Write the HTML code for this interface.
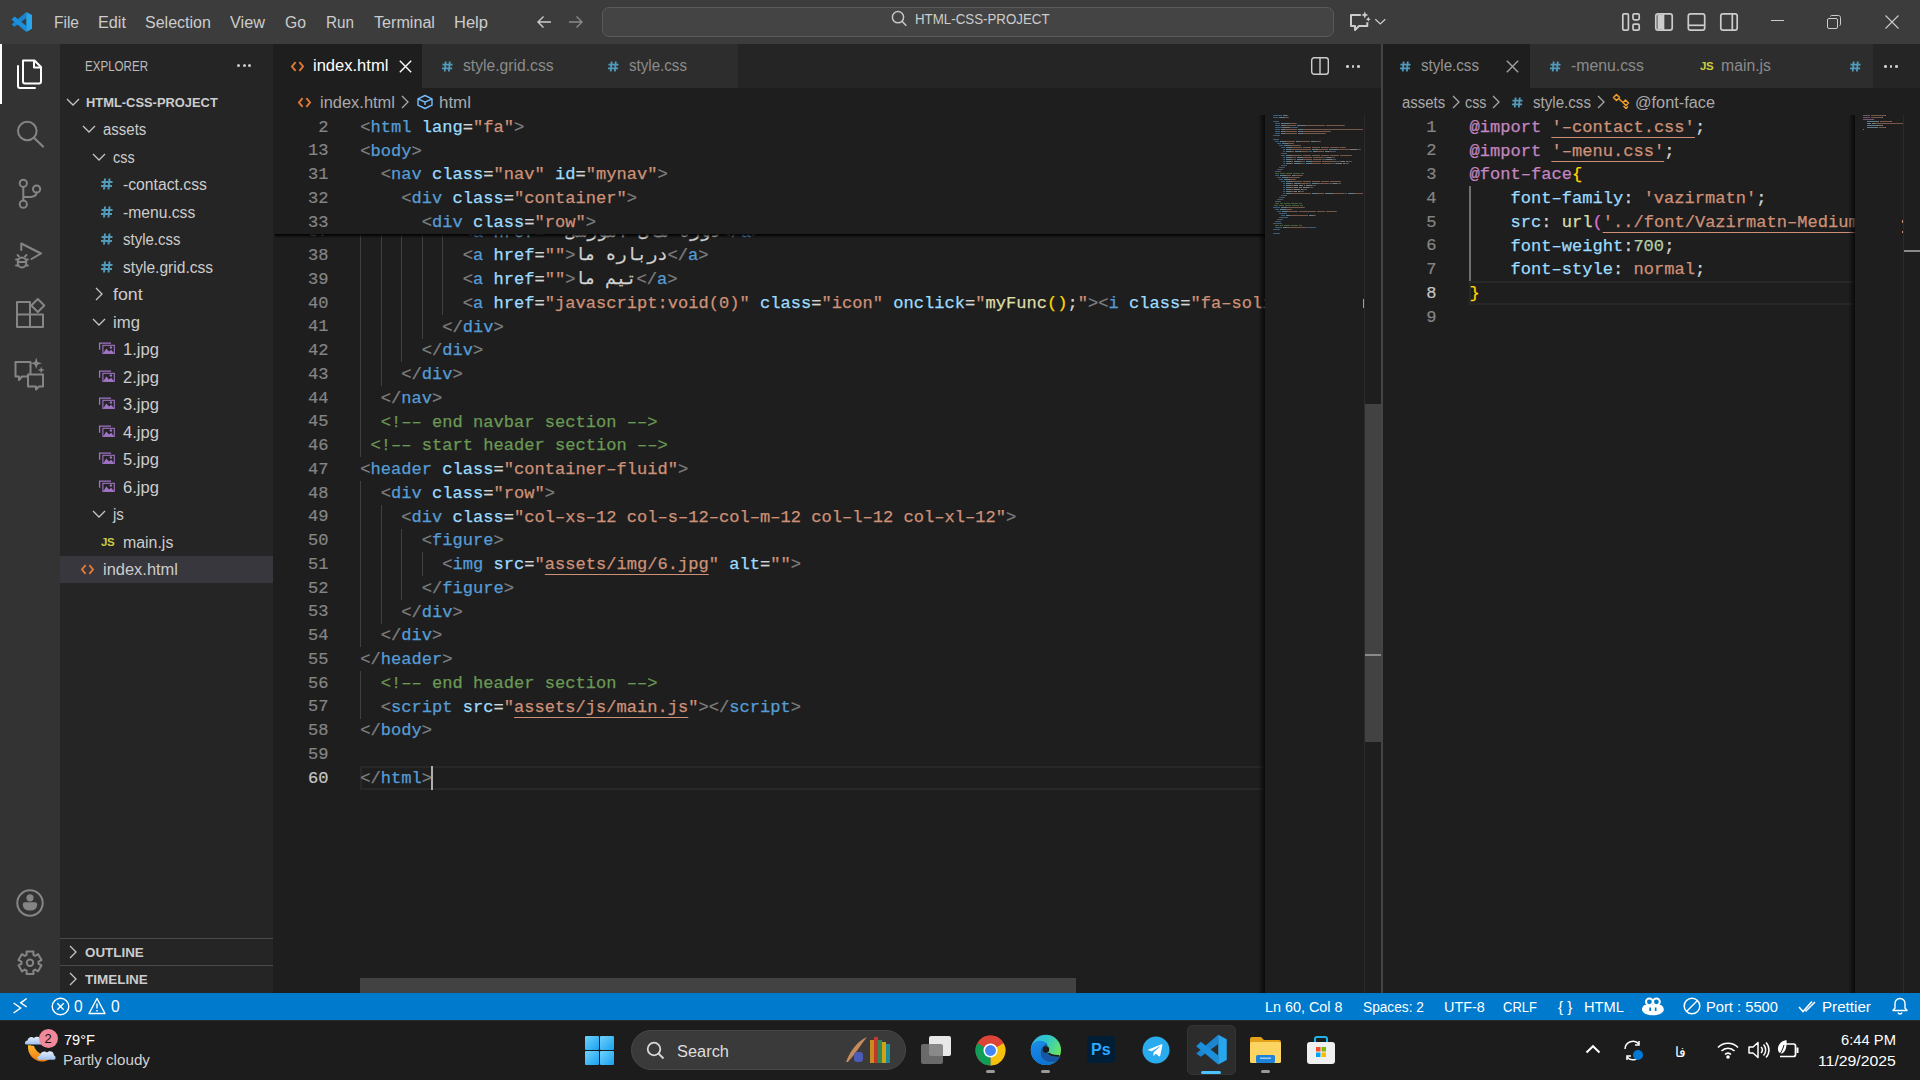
<!DOCTYPE html><html><head><meta charset="utf-8"><style>
*{box-sizing:border-box}
html,body{margin:0;padding:0;overflow:hidden}
body{width:1920px;height:1080px;overflow:hidden;position:relative;background:#1e1e1e;font-family:"Liberation Sans",sans-serif;color:#cccccc}
.a{position:absolute}
.t{position:absolute;white-space:pre;line-height:1}
.code{position:absolute;white-space:pre;font-family:"Liberation Mono",monospace;font-size:17.08px;line-height:23.75px;height:23.75px;padding-top:0.8px;-webkit-text-stroke:0.25px currentColor}
.ln{position:absolute;white-space:pre;font-family:"Liberation Mono",monospace;font-size:17.08px;line-height:23.75px;color:#858585;text-align:right;padding-top:0.6px;-webkit-text-stroke:0.2px currentColor}
svg{position:absolute;overflow:visible}
</style></head><body>
<div class="a" style="left:0.00px;top:0.00px;width:1920.00px;height:44.00px;background:#3c3c3c;"></div><svg style="left:8.0px;top:8.0px" width="30.0" height="30.0" viewBox="8 8 30 30"><path d="M26.3 11.9 L26.3 18.0 L14.6 26.7 L11.5 24.4 Z" fill="#1a86d2"/><path d="M14.6 16.5 L26.3 25.8 L26.3 31.9 L11.5 19.6 Z" fill="#1c8fdc"/><path d="M26.3 11.9 L32.0 14.9 L32.0 28.8 L26.3 31.9 Z" fill="#27a6ee"/></svg><div class="t" style="left:54.0px;top:14.76px;font-size:16.00px;color:#cccccc;font-weight:normal;transform:scaleX(0.9681);transform-origin:0 0;">File</div><div class="t" style="left:98.0px;top:14.76px;font-size:16.00px;color:#cccccc;font-weight:normal;transform:scaleX(1.0138);transform-origin:0 0;">Edit</div><div class="t" style="left:145.0px;top:14.76px;font-size:16.00px;color:#cccccc;font-weight:normal;transform:scaleX(1.0020);transform-origin:0 0;">Selection</div><div class="t" style="left:230.0px;top:14.76px;font-size:16.00px;color:#cccccc;font-weight:normal;transform:scaleX(1.0166);transform-origin:0 0;">View</div><div class="t" style="left:285.0px;top:14.76px;font-size:16.00px;color:#cccccc;font-weight:normal;transform:scaleX(0.9820);transform-origin:0 0;">Go</div><div class="t" style="left:326.0px;top:14.76px;font-size:16.00px;color:#cccccc;font-weight:normal;transform:scaleX(0.9523);transform-origin:0 0;">Run</div><div class="t" style="left:374.0px;top:14.76px;font-size:16.00px;color:#cccccc;font-weight:normal;transform:scaleX(1.0081);transform-origin:0 0;">Terminal</div><div class="t" style="left:454.0px;top:14.76px;font-size:16.00px;color:#cccccc;font-weight:normal;transform:scaleX(1.0320);transform-origin:0 0;">Help</div><svg style="left:536px;top:14px" width="16" height="16" viewBox="0 0 16 16"><path d="M15 8H2M7.5 2.5L2 8l5.5 5.5" stroke="#cccccc" stroke-width="1.4" fill="none"/></svg><svg style="left:568px;top:14px" width="16" height="16" viewBox="0 0 16 16"><path d="M1 8h13M8.5 2.5L14 8l-5.5 5.5" stroke="#8a8a8a" stroke-width="1.4" fill="none"/></svg><div class="a" style="left:602px;top:7px;width:732px;height:30px;background:#444444;border:1px solid #5a5a5a;border-radius:7px"></div><svg style="left:885px;top:5px" width="30" height="30" viewBox="885 5 30 30" fill="none"><circle cx="898" cy="17.2" r="5.6" stroke="#c5c5c5" stroke-width="1.5"/><path d="M902 21.3 L906.3 25.8" stroke="#c5c5c5" stroke-width="1.6"/></svg><div class="t" style="left:915.0px;top:10.65px;font-size:15.30px;color:#cccccc;font-weight:normal;transform:scaleX(0.8697);transform-origin:0 0;">HTML-CSS-PROJECT</div><svg style="left:1340px;top:4px" width="60" height="36" viewBox="1340 4 60 36" fill="none"><path d="M1360.8 15 H1351 V26 H1355 V30 L1359 26 H1367.3 V22.3" stroke="#cccccc" stroke-width="2" stroke-linejoin="round"/><path d="M1364.8 11.5 L1365.9 14 L1368.4 15 L1365.9 16 L1364.8 18.5 L1363.7 16 L1361.2 15 L1363.7 14 Z" fill="#cccccc"/><path d="M1368.3 16.8 L1369.1 18.5 L1370.8 19.3 L1369.1 20.1 L1368.3 21.8 L1367.5 20.1 L1365.8 19.3 L1367.5 18.5 Z" fill="#cccccc"/><path d="M1375.3 19.3 L1380.3 23.9 L1385.3 19.3" stroke="#cccccc" stroke-width="1.3"/></svg><svg style="left:1615px;top:8px" width="130" height="30" viewBox="1615 8 130 30" fill="none"><g stroke="#cccccc" stroke-width="1.7"><rect x="1622.8" y="13.8" width="5.6" height="16.4" rx="1.3"/><rect x="1633" y="13.8" width="6.2" height="6" rx="1.3"/><rect x="1633" y="24.2" width="6.2" height="6" rx="1.3"/><rect x="1655.8" y="13.8" width="16.4" height="16.4" rx="2.2"/><rect x="1688.3" y="13.8" width="16.4" height="16.4" rx="2.2"/><path d="M1688.5 25.3 H1704.5"/><rect x="1720.8" y="13.8" width="16.4" height="16.4" rx="2.2"/><path d="M1732.3 14 V30"/></g><path d="M1657.5 14.5 H1664 V29.5 H1657.5 Z" fill="#cccccc"/><path d="M1663.5 14 V30" stroke="#cccccc" stroke-width="1.7"/></svg><div class="a" style="left:1771.00px;top:20.00px;width:13.00px;height:1.20px;background:#cccccc;"></div><svg style="left:1827px;top:15px" width="14" height="14" viewBox="0 0 14 14" fill="none" stroke="#cccccc" stroke-width="1">
<rect x="0.5" y="3.5" width="10" height="10" rx="1.5"/><path d="M3.5 1.5c0-.6.4-1 1-1h7c1.1 0 2 .9 2 2v7c0 .6-.4 1-1 1"/></svg><svg style="left:1885px;top:15px" width="14" height="14" viewBox="0 0 14 14" fill="none" stroke="#cccccc" stroke-width="1.1">
<path d="M0.5 0.5l13 13M13.5 0.5l-13 13"/></svg><div class="a" style="left:0.00px;top:44.00px;width:60.00px;height:949.00px;background:#333333;"></div><div class="a" style="left:0.00px;top:44.00px;width:2.00px;height:60.00px;background:#ffffff;"></div><svg style="left:0;top:0" width="60" height="1000" viewBox="0 0 60 1000" fill="none" stroke-linecap="round" stroke-linejoin="round"><path d="M23 60.5 H34.5 L41 67 V81.5 Q41 83.5 39 83.5 H25 Q23 83.5 23 81.5 Z" stroke="#ffffff" stroke-width="2"/><path d="M34 61 V67.5 H40.5" stroke="#ffffff" stroke-width="2"/><path d="M18 66 V86 Q18 88 20 88 H35" stroke="#ffffff" stroke-width="2"/><circle cx="27.3" cy="131" r="9.3" stroke="#858585" stroke-width="2"/><path d="M34.2 138 L43 146.5" stroke="#858585" stroke-width="2.2"/><circle cx="23.3" cy="183.3" r="3.6" stroke="#858585" stroke-width="2"/><circle cx="23.3" cy="204.2" r="3.6" stroke="#858585" stroke-width="2"/><circle cx="36.6" cy="189" r="3.6" stroke="#858585" stroke-width="2"/><path d="M23.3 187 V200.5 M36.6 192.6 Q36.6 196.5 31 197 L23.5 197" stroke="#858585" stroke-width="2"/><path d="M21.3 250 V243.5 L41 253.5 L31.5 259" stroke="#858585" stroke-width="2"/><ellipse cx="22" cy="262.5" rx="4.3" ry="5" stroke="#858585" stroke-width="2"/><path d="M16 259.5 H18 M16 265.5 H18 M26 259.5 H28 M26 265.5 H28 M19 256.5 L17.5 255 M25 256.5 L26.5 255 M18 262 H26" stroke="#858585" stroke-width="1.8"/><path d="M17 302 H30 V327 H17 Z M17 314.5 H43 V327 H30" stroke="#858585" stroke-width="2"/><path d="M37.8 299 L44.3 305.5 L37.8 312 L31.3 305.5 Z" stroke="#858585" stroke-width="2"/><path d="M15.5 362 H30.5 V376.5 H22 L19 380 V376.5 H15.5 Z" stroke="#858585" stroke-width="2"/><path d="M28 374.5 H43 V386.5 H39 L36 389.5 V386.5 H28 Z" stroke="#858585" stroke-width="2" fill="#333333"/><path d="M36.2 357.5 L37.6 361.9 L42 363.3 L37.6 364.7 L36.2 369.1 L34.8 364.7 L30.4 363.3 L34.8 361.9 Z" fill="#858585"/><path d="M41.2 366.5 L42.1 369.1 L44.7 370 L42.1 370.9 L41.2 373.5 L40.3 370.9 L37.7 370 L40.3 369.1 Z" fill="#858585"/><circle cx="30" cy="903" r="12.7" stroke="#858585" stroke-width="2"/><circle cx="30" cy="897.8" r="3.6" fill="#858585"/><path d="M22.8 904.5 Q22.8 902.3 25 902.3 H35 Q37.2 902.3 37.2 904.5 Q37.2 910.5 30 910.5 Q22.8 910.5 22.8 904.5 Z" fill="#858585"/></svg><svg style="left:0;top:0" width="60" height="1000" viewBox="0 0 60 1000" fill="none"><path d="M26.51 951.43 L33.49 951.43 L33.35 954.78 L35.19 955.84 L38.02 954.04 L41.51 960.08 L38.53 961.64 L38.53 963.76 L41.51 965.32 L38.02 971.36 L35.19 969.56 L33.35 970.62 L33.49 973.97 L26.51 973.97 L26.65 970.62 L24.81 969.56 L21.98 971.36 L18.49 965.32 L21.47 963.76 L21.47 961.64 L18.49 960.08 L21.98 954.04 L24.81 955.84 L26.65 954.78 Z" stroke="#858585" stroke-width="2" stroke-linejoin="round"/><circle cx="30" cy="962.7" r="3.2" stroke="#858585" stroke-width="2"/></svg><div class="a" style="left:60.00px;top:44.00px;width:213.00px;height:949.00px;background:#252526;"></div><div class="t" style="left:85.3px;top:59.28px;font-size:14.20px;color:#bbbbbb;font-weight:normal;transform:scaleX(0.8159);transform-origin:0 0;">EXPLORER</div><div class="a" style="left:237.30px;top:64.30px;width:3.00px;height:3.00px;background:#cccccc;border-radius:50%"></div><div class="a" style="left:242.60px;top:64.30px;width:3.00px;height:3.00px;background:#cccccc;border-radius:50%"></div><div class="a" style="left:247.90px;top:64.30px;width:3.00px;height:3.00px;background:#cccccc;border-radius:50%"></div><svg style="left:66.0px;top:97.8px" width="14" height="8" viewBox="0 0 14 8"><path d="M1 1l6 6 6-6" stroke="#c5c5c5" stroke-width="1.3" fill="none"/></svg><div class="t" style="left:85.5px;top:95.54px;font-size:13.60px;color:#cccccc;font-weight:bold;transform:scaleX(0.9485);transform-origin:0 0;">HTML-CSS-PROJECT</div><svg style="left:82.0px;top:125.2px" width="14" height="8" viewBox="0 0 14 8"><path d="M1 1l6 6 6-6" stroke="#c5c5c5" stroke-width="1.3" fill="none"/></svg><div class="t" style="left:102.8px;top:122.18px;font-size:15.80px;color:#cccccc;font-weight:normal;transform:scaleX(0.9494);transform-origin:0 0;">assets</div><svg style="left:92.0px;top:152.8px" width="14" height="8" viewBox="0 0 14 8"><path d="M1 1l6 6 6-6" stroke="#c5c5c5" stroke-width="1.3" fill="none"/></svg><div class="t" style="left:113.0px;top:149.68px;font-size:15.80px;color:#cccccc;font-weight:normal;transform:scaleX(0.9133);transform-origin:0 0;">css</div><svg style="left:101.4px;top:178.2px" width="12" height="12" viewBox="0 0 12 12"><path d="M4 0.5L3 11.5M8.5 0.5L7.5 11.5M0.5 4h11M0 8h11" stroke="#519aba" stroke-width="2" fill="none"/></svg><div class="t" style="left:123.0px;top:177.18px;font-size:15.80px;color:#cccccc;font-weight:normal;transform:scaleX(0.9960);transform-origin:0 0;">-contact.css</div><svg style="left:101.4px;top:205.8px" width="12" height="12" viewBox="0 0 12 12"><path d="M4 0.5L3 11.5M8.5 0.5L7.5 11.5M0.5 4h11M0 8h11" stroke="#519aba" stroke-width="2" fill="none"/></svg><div class="t" style="left:123.0px;top:204.68px;font-size:15.80px;color:#cccccc;font-weight:normal;transform:scaleX(0.9914);transform-origin:0 0;">-menu.css</div><svg style="left:101.4px;top:233.2px" width="12" height="12" viewBox="0 0 12 12"><path d="M4 0.5L3 11.5M8.5 0.5L7.5 11.5M0.5 4h11M0 8h11" stroke="#519aba" stroke-width="2" fill="none"/></svg><div class="t" style="left:123.0px;top:232.18px;font-size:15.80px;color:#cccccc;font-weight:normal;transform:scaleX(0.9483);transform-origin:0 0;">style.css</div><svg style="left:101.4px;top:260.8px" width="12" height="12" viewBox="0 0 12 12"><path d="M4 0.5L3 11.5M8.5 0.5L7.5 11.5M0.5 4h11M0 8h11" stroke="#519aba" stroke-width="2" fill="none"/></svg><div class="t" style="left:123.0px;top:259.68px;font-size:15.80px;color:#cccccc;font-weight:normal;transform:scaleX(0.9874);transform-origin:0 0;">style.grid.css</div><svg style="left:95.0px;top:287.2px" width="8" height="14" viewBox="0 0 8 14"><path d="M1 1l6 6-6 6" stroke="#c5c5c5" stroke-width="1.3" fill="none"/></svg><div class="t" style="left:113.0px;top:287.18px;font-size:15.80px;color:#cccccc;font-weight:normal;transform:scaleX(1.1248);transform-origin:0 0;">font</div><svg style="left:92.0px;top:317.8px" width="14" height="8" viewBox="0 0 14 8"><path d="M1 1l6 6 6-6" stroke="#c5c5c5" stroke-width="1.3" fill="none"/></svg><div class="t" style="left:113.0px;top:314.68px;font-size:15.80px;color:#cccccc;font-weight:normal;transform:scaleX(1.0581);transform-origin:0 0;">img</div><svg style="left:96px;top:335.0px" width="24" height="24" viewBox="96 335.0 24 24" fill="none"><path d="M99.6 349.80 V343.10 H111" stroke="#a074c4" stroke-width="1.3"/><rect x="102.9" y="345.30" width="11.4" height="8.1" stroke="#a074c4" stroke-width="1.1"/><path d="M103.3 353.20 L106.3 348.60 L109 351.60 L111.2 349.80 L114 353.20 Z" fill="#a074c4"/><circle cx="110.9" cy="347.50" r="1.2" fill="#a074c4"/></svg><div class="t" style="left:122.7px;top:342.18px;font-size:15.80px;color:#cccccc;font-weight:normal;transform:scaleX(1.0491);transform-origin:0 0;">1.jpg</div><svg style="left:96px;top:362.5px" width="24" height="24" viewBox="96 362.5 24 24" fill="none"><path d="M99.6 377.30 V370.60 H111" stroke="#a074c4" stroke-width="1.3"/><rect x="102.9" y="372.80" width="11.4" height="8.1" stroke="#a074c4" stroke-width="1.1"/><path d="M103.3 380.70 L106.3 376.10 L109 379.10 L111.2 377.30 L114 380.70 Z" fill="#a074c4"/><circle cx="110.9" cy="375.00" r="1.2" fill="#a074c4"/></svg><div class="t" style="left:122.7px;top:369.68px;font-size:15.80px;color:#cccccc;font-weight:normal;transform:scaleX(1.0491);transform-origin:0 0;">2.jpg</div><svg style="left:96px;top:390.0px" width="24" height="24" viewBox="96 390.0 24 24" fill="none"><path d="M99.6 404.80 V398.10 H111" stroke="#a074c4" stroke-width="1.3"/><rect x="102.9" y="400.30" width="11.4" height="8.1" stroke="#a074c4" stroke-width="1.1"/><path d="M103.3 408.20 L106.3 403.60 L109 406.60 L111.2 404.80 L114 408.20 Z" fill="#a074c4"/><circle cx="110.9" cy="402.50" r="1.2" fill="#a074c4"/></svg><div class="t" style="left:122.7px;top:397.18px;font-size:15.80px;color:#cccccc;font-weight:normal;transform:scaleX(1.0491);transform-origin:0 0;">3.jpg</div><svg style="left:96px;top:417.5px" width="24" height="24" viewBox="96 417.5 24 24" fill="none"><path d="M99.6 432.30 V425.60 H111" stroke="#a074c4" stroke-width="1.3"/><rect x="102.9" y="427.80" width="11.4" height="8.1" stroke="#a074c4" stroke-width="1.1"/><path d="M103.3 435.70 L106.3 431.10 L109 434.10 L111.2 432.30 L114 435.70 Z" fill="#a074c4"/><circle cx="110.9" cy="430.00" r="1.2" fill="#a074c4"/></svg><div class="t" style="left:122.7px;top:424.68px;font-size:15.80px;color:#cccccc;font-weight:normal;transform:scaleX(1.0491);transform-origin:0 0;">4.jpg</div><svg style="left:96px;top:445.0px" width="24" height="24" viewBox="96 445.0 24 24" fill="none"><path d="M99.6 459.80 V453.10 H111" stroke="#a074c4" stroke-width="1.3"/><rect x="102.9" y="455.30" width="11.4" height="8.1" stroke="#a074c4" stroke-width="1.1"/><path d="M103.3 463.20 L106.3 458.60 L109 461.60 L111.2 459.80 L114 463.20 Z" fill="#a074c4"/><circle cx="110.9" cy="457.50" r="1.2" fill="#a074c4"/></svg><div class="t" style="left:122.7px;top:452.18px;font-size:15.80px;color:#cccccc;font-weight:normal;transform:scaleX(1.0491);transform-origin:0 0;">5.jpg</div><svg style="left:96px;top:472.5px" width="24" height="24" viewBox="96 472.5 24 24" fill="none"><path d="M99.6 487.30 V480.60 H111" stroke="#a074c4" stroke-width="1.3"/><rect x="102.9" y="482.80" width="11.4" height="8.1" stroke="#a074c4" stroke-width="1.1"/><path d="M103.3 490.70 L106.3 486.10 L109 489.10 L111.2 487.30 L114 490.70 Z" fill="#a074c4"/><circle cx="110.9" cy="485.00" r="1.2" fill="#a074c4"/></svg><div class="t" style="left:122.7px;top:479.68px;font-size:15.80px;color:#cccccc;font-weight:normal;transform:scaleX(1.0491);transform-origin:0 0;">6.jpg</div><svg style="left:92.0px;top:510.2px" width="14" height="8" viewBox="0 0 14 8"><path d="M1 1l6 6 6-6" stroke="#c5c5c5" stroke-width="1.3" fill="none"/></svg><div class="t" style="left:113.0px;top:507.18px;font-size:15.80px;color:#cccccc;font-weight:normal;transform:scaleX(0.9585);transform-origin:0 0;">js</div><div class="t" style="left:101.0px;top:537.02px;font-size:11.50px;color:#cbcb41;font-weight:bold;letter-spacing:-0.5px">JS</div><div class="t" style="left:122.7px;top:534.68px;font-size:15.80px;color:#cccccc;font-weight:normal;transform:scaleX(1.0060);transform-origin:0 0;">main.js</div><div class="a" style="left:60.00px;top:555.50px;width:213.00px;height:27.50px;background:#37373d;"></div><svg style="left:80.5px;top:563.8px" width="13" height="11" viewBox="0 0 13 11"><path d="M4.6 1.2L1 5.5l3.6 4.3M8.4 1.2L12 5.5l-3.6 4.3" stroke="#e37933" stroke-width="1.9" fill="none"/></svg><div class="t" style="left:103.0px;top:562.18px;font-size:15.80px;color:#cccccc;font-weight:normal;transform:scaleX(1.0409);transform-origin:0 0;">index.html</div><div class="a" style="left:60.00px;top:938.00px;width:213.00px;height:1.00px;background:#4a4a4b;"></div><div class="a" style="left:60.00px;top:965.00px;width:213.00px;height:1.00px;background:#4a4a4b;"></div><svg style="left:69.0px;top:945.0px" width="8" height="14" viewBox="0 0 8 14"><path d="M1 1l6 6-6 6" stroke="#c5c5c5" stroke-width="1.3" fill="none"/></svg><div class="t" style="left:85.0px;top:945.99px;font-size:13.60px;color:#cccccc;font-weight:bold;transform:scaleX(0.9857);transform-origin:0 0;">OUTLINE</div><svg style="left:69.0px;top:972.0px" width="8" height="14" viewBox="0 0 8 14"><path d="M1 1l6 6-6 6" stroke="#c5c5c5" stroke-width="1.3" fill="none"/></svg><div class="t" style="left:85.0px;top:972.99px;font-size:13.60px;color:#cccccc;font-weight:bold;transform:scaleX(0.9902);transform-origin:0 0;">TIMELINE</div><div class="a" style="left:273.00px;top:44.00px;width:1108.00px;height:44.00px;background:#252526;"></div><div class="a" style="left:273.00px;top:44.00px;width:149.00px;height:44.00px;background:#1e1e1e;"></div><div class="a" style="left:422.00px;top:44.00px;width:1.00px;height:44.00px;background:#252526;"></div><svg style="left:290.7px;top:60.5px" width="13" height="11" viewBox="0 0 13 11"><path d="M4.6 1.2L1 5.5l3.6 4.3M8.4 1.2L12 5.5l-3.6 4.3" stroke="#e37933" stroke-width="1.9" fill="none"/></svg><div class="t" style="left:312.6px;top:58.43px;font-size:15.80px;color:#ffffff;font-weight:normal;transform:scaleX(1.0465);transform-origin:0 0;">index.html</div><svg style="left:398.6px;top:59.5px" width="13" height="13" viewBox="0 0 13 13"><path d="M0.8 0.8l11.4 11.4M12.2 0.8L0.8 12.2" stroke="#ffffff" stroke-width="1.4"/></svg><div class="a" style="left:422.00px;top:44.00px;width:166.00px;height:44.00px;background:#2d2d2d;"></div><div class="a" style="left:588.00px;top:44.00px;width:1.00px;height:44.00px;background:#252526;"></div><svg style="left:442.0px;top:60.5px" width="11" height="11" viewBox="0 0 12 12"><path d="M4 0.5L3 11.5M8.5 0.5L7.5 11.5M0.5 4h11M0 8h11" stroke="#519aba" stroke-width="2" fill="none"/></svg><div class="t" style="left:463.4px;top:58.43px;font-size:15.80px;color:#8b8b8b;font-weight:normal;transform:scaleX(0.9918);transform-origin:0 0;">style.grid.css</div><div class="a" style="left:588.00px;top:44.00px;width:150.00px;height:44.00px;background:#2d2d2d;"></div><div class="a" style="left:738.00px;top:44.00px;width:1.00px;height:44.00px;background:#252526;"></div><svg style="left:607.7px;top:60.5px" width="11" height="11" viewBox="0 0 12 12"><path d="M4 0.5L3 11.5M8.5 0.5L7.5 11.5M0.5 4h11M0 8h11" stroke="#519aba" stroke-width="2" fill="none"/></svg><div class="t" style="left:629.0px;top:58.43px;font-size:15.80px;color:#8b8b8b;font-weight:normal;transform:scaleX(0.9566);transform-origin:0 0;">style.css</div><svg style="left:1311px;top:57px" width="18" height="18" viewBox="0 0 18 18" fill="none" stroke="#cccccc" stroke-width="1.4">
<rect x="0.7" y="0.7" width="16.6" height="16.6" rx="2.5"/><path d="M9 1v16"/></svg><div class="a" style="left:1346.00px;top:65.00px;width:2.60px;height:2.60px;background:#cccccc;border-radius:50%"></div><div class="a" style="left:1351.50px;top:65.00px;width:2.60px;height:2.60px;background:#cccccc;border-radius:50%"></div><div class="a" style="left:1357.00px;top:65.00px;width:2.60px;height:2.60px;background:#cccccc;border-radius:50%"></div><svg style="left:298.0px;top:96.5px" width="13" height="11" viewBox="0 0 13 11"><path d="M4.6 1.2L1 5.5l3.6 4.3M8.4 1.2L12 5.5l-3.6 4.3" stroke="#e37933" stroke-width="1.9" fill="none"/></svg><div class="t" style="left:320.0px;top:94.63px;font-size:15.80px;color:#a9a9a9;font-weight:normal;transform:scaleX(1.0409);transform-origin:0 0;">index.html</div><svg style="left:401.0px;top:95.0px" width="8" height="14" viewBox="0 0 8 14"><path d="M1 1l6 6-6 6" stroke="#a9a9a9" stroke-width="1.3" fill="none"/></svg><svg style="left:416px;top:94px" width="18" height="16" viewBox="0 0 18 16"><path d="M9 1.5l7 3.3v6.4l-7 3.3-7-3.3V4.8z M2 4.8l7 3.3 7-3.3 M9 8.1v3" stroke="#75beff" stroke-width="1.4" fill="none" stroke-linejoin="round"/></svg><div class="t" style="left:439.0px;top:94.63px;font-size:15.80px;color:#a9a9a9;font-weight:normal;transform:scaleX(1.0705);transform-origin:0 0;">html</div><div class="a" style="left:360.30px;top:219.75px;width:1.20px;height:23.75px;background:#404040;"></div><div class="a" style="left:380.80px;top:219.75px;width:1.20px;height:23.75px;background:#404040;"></div><div class="a" style="left:401.30px;top:219.75px;width:1.20px;height:23.75px;background:#404040;"></div><div class="a" style="left:421.80px;top:219.75px;width:1.20px;height:23.75px;background:#404040;"></div><div class="a" style="left:442.30px;top:219.75px;width:1.20px;height:23.75px;background:#404040;"></div><div class="a" style="left:360.30px;top:243.50px;width:1.20px;height:23.75px;background:#404040;"></div><div class="a" style="left:380.80px;top:243.50px;width:1.20px;height:23.75px;background:#404040;"></div><div class="a" style="left:401.30px;top:243.50px;width:1.20px;height:23.75px;background:#404040;"></div><div class="a" style="left:421.80px;top:243.50px;width:1.20px;height:23.75px;background:#404040;"></div><div class="a" style="left:442.30px;top:243.50px;width:1.20px;height:23.75px;background:#404040;"></div><div class="a" style="left:360.30px;top:267.25px;width:1.20px;height:23.75px;background:#404040;"></div><div class="a" style="left:380.80px;top:267.25px;width:1.20px;height:23.75px;background:#404040;"></div><div class="a" style="left:401.30px;top:267.25px;width:1.20px;height:23.75px;background:#404040;"></div><div class="a" style="left:421.80px;top:267.25px;width:1.20px;height:23.75px;background:#404040;"></div><div class="a" style="left:442.30px;top:267.25px;width:1.20px;height:23.75px;background:#404040;"></div><div class="a" style="left:360.30px;top:291.00px;width:1.20px;height:23.75px;background:#404040;"></div><div class="a" style="left:380.80px;top:291.00px;width:1.20px;height:23.75px;background:#404040;"></div><div class="a" style="left:401.30px;top:291.00px;width:1.20px;height:23.75px;background:#404040;"></div><div class="a" style="left:421.80px;top:291.00px;width:1.20px;height:23.75px;background:#404040;"></div><div class="a" style="left:442.30px;top:291.00px;width:1.20px;height:23.75px;background:#404040;"></div><div class="a" style="left:360.30px;top:314.75px;width:1.20px;height:23.75px;background:#404040;"></div><div class="a" style="left:380.80px;top:314.75px;width:1.20px;height:23.75px;background:#404040;"></div><div class="a" style="left:401.30px;top:314.75px;width:1.20px;height:23.75px;background:#404040;"></div><div class="a" style="left:421.80px;top:314.75px;width:1.20px;height:23.75px;background:#404040;"></div><div class="a" style="left:360.30px;top:338.50px;width:1.20px;height:23.75px;background:#404040;"></div><div class="a" style="left:380.80px;top:338.50px;width:1.20px;height:23.75px;background:#404040;"></div><div class="a" style="left:401.30px;top:338.50px;width:1.20px;height:23.75px;background:#404040;"></div><div class="a" style="left:360.30px;top:362.25px;width:1.20px;height:23.75px;background:#404040;"></div><div class="a" style="left:380.80px;top:362.25px;width:1.20px;height:23.75px;background:#404040;"></div><div class="a" style="left:360.30px;top:386.00px;width:1.20px;height:23.75px;background:#404040;"></div><div class="a" style="left:360.30px;top:409.75px;width:1.20px;height:23.75px;background:#404040;"></div><div class="a" style="left:360.30px;top:433.50px;width:1.20px;height:23.75px;background:#404040;"></div><div class="a" style="left:360.30px;top:481.00px;width:1.20px;height:23.75px;background:#404040;"></div><div class="a" style="left:360.30px;top:504.75px;width:1.20px;height:23.75px;background:#404040;"></div><div class="a" style="left:380.80px;top:504.75px;width:1.20px;height:23.75px;background:#404040;"></div><div class="a" style="left:360.30px;top:528.50px;width:1.20px;height:23.75px;background:#404040;"></div><div class="a" style="left:380.80px;top:528.50px;width:1.20px;height:23.75px;background:#404040;"></div><div class="a" style="left:401.30px;top:528.50px;width:1.20px;height:23.75px;background:#404040;"></div><div class="a" style="left:360.30px;top:552.25px;width:1.20px;height:23.75px;background:#404040;"></div><div class="a" style="left:380.80px;top:552.25px;width:1.20px;height:23.75px;background:#404040;"></div><div class="a" style="left:401.30px;top:552.25px;width:1.20px;height:23.75px;background:#404040;"></div><div class="a" style="left:421.80px;top:552.25px;width:1.20px;height:23.75px;background:#404040;"></div><div class="a" style="left:360.30px;top:576.00px;width:1.20px;height:23.75px;background:#404040;"></div><div class="a" style="left:380.80px;top:576.00px;width:1.20px;height:23.75px;background:#404040;"></div><div class="a" style="left:401.30px;top:576.00px;width:1.20px;height:23.75px;background:#404040;"></div><div class="a" style="left:360.30px;top:599.75px;width:1.20px;height:23.75px;background:#404040;"></div><div class="a" style="left:380.80px;top:599.75px;width:1.20px;height:23.75px;background:#404040;"></div><div class="a" style="left:360.30px;top:623.50px;width:1.20px;height:23.75px;background:#404040;"></div><div class="a" style="left:360.30px;top:671.00px;width:1.20px;height:23.75px;background:#404040;"></div><div class="a" style="left:360.30px;top:694.75px;width:1.20px;height:23.75px;background:#404040;"></div><div class="a" style="left:360.3px;top:766.00px;width:904.7px;height:23.75px;border:2px solid #282828;border-right:none"></div><div class="code" style="left:360.3px;top:219.75px;width:904.7px;overflow:hidden"><span style="color:#d4d4d4">          </span><span style="color:#808080">&lt;</span><span style="color:#569cd6">a</span><span style="color:#d4d4d4"> </span><span style="color:#9cdcfe">href</span><span style="color:#d4d4d4">=</span><span style="color:#ce9178">""</span><span style="color:#808080">&gt;</span><span style="color:#d4d4d4;unicode-bidi:isolate;direction:rtl;display:inline-block;width:145px;text-align:center;vertical-align:top">دوره های آموزشی</span><span style="color:#808080">&lt;/</span><span style="color:#569cd6">a</span><span style="color:#808080">&gt;</span></div><div class="ln" style="left:268.5px;top:219.75px;width:60px;color:#858585">37</div><div class="code" style="left:360.3px;top:243.50px;width:904.7px;overflow:hidden"><span style="color:#d4d4d4">          </span><span style="color:#808080">&lt;</span><span style="color:#569cd6">a</span><span style="color:#d4d4d4"> </span><span style="color:#9cdcfe">href</span><span style="color:#d4d4d4">=</span><span style="color:#ce9178">""</span><span style="color:#808080">&gt;</span><span style="color:#d4d4d4;unicode-bidi:isolate;direction:rtl;display:inline-block;width:92px;text-align:center;vertical-align:top">درباره ما</span><span style="color:#808080">&lt;/</span><span style="color:#569cd6">a</span><span style="color:#808080">&gt;</span></div><div class="ln" style="left:268.5px;top:243.50px;width:60px;color:#858585">38</div><div class="code" style="left:360.3px;top:267.25px;width:904.7px;overflow:hidden"><span style="color:#d4d4d4">          </span><span style="color:#808080">&lt;</span><span style="color:#569cd6">a</span><span style="color:#d4d4d4"> </span><span style="color:#9cdcfe">href</span><span style="color:#d4d4d4">=</span><span style="color:#ce9178">""</span><span style="color:#808080">&gt;</span><span style="color:#d4d4d4;unicode-bidi:isolate;direction:rtl;display:inline-block;width:61px;text-align:center;vertical-align:top">تیم ما</span><span style="color:#808080">&lt;/</span><span style="color:#569cd6">a</span><span style="color:#808080">&gt;</span></div><div class="ln" style="left:268.5px;top:267.25px;width:60px;color:#858585">39</div><div class="code" style="left:360.3px;top:291.00px;width:904.7px;overflow:hidden"><span style="color:#d4d4d4">          </span><span style="color:#808080">&lt;</span><span style="color:#569cd6">a</span><span style="color:#d4d4d4"> </span><span style="color:#9cdcfe">href</span><span style="color:#d4d4d4">=</span><span style="color:#ce9178">"javascript:void(0)"</span><span style="color:#d4d4d4"> </span><span style="color:#9cdcfe">class</span><span style="color:#d4d4d4">=</span><span style="color:#ce9178">"icon"</span><span style="color:#d4d4d4"> </span><span style="color:#9cdcfe">onclick</span><span style="color:#d4d4d4">=</span><span style="color:#ce9178">"</span><span style="color:#dcdcaa">myFunc</span><span style="color:#ffd700">()</span><span style="color:#d4d4d4">;</span><span style="color:#ce9178">"</span><span style="color:#808080">&gt;</span><span style="color:#808080">&lt;</span><span style="color:#569cd6">i</span><span style="color:#d4d4d4"> </span><span style="color:#9cdcfe">class</span><span style="color:#d4d4d4">=</span><span style="color:#ce9178">"fa–solid fa–bars"</span><span style="color:#808080">&gt;</span><span style="color:#808080">&lt;/</span><span style="color:#569cd6">i</span><span style="color:#808080">&gt;</span><span style="color:#808080">&lt;/</span><span style="color:#569cd6">a</span><span style="color:#808080">&gt;</span></div><div class="ln" style="left:268.5px;top:291.00px;width:60px;color:#858585">40</div><div class="code" style="left:360.3px;top:314.75px;width:904.7px;overflow:hidden"><span style="color:#d4d4d4">        </span><span style="color:#808080">&lt;/</span><span style="color:#569cd6">div</span><span style="color:#808080">&gt;</span></div><div class="ln" style="left:268.5px;top:314.75px;width:60px;color:#858585">41</div><div class="code" style="left:360.3px;top:338.50px;width:904.7px;overflow:hidden"><span style="color:#d4d4d4">      </span><span style="color:#808080">&lt;/</span><span style="color:#569cd6">div</span><span style="color:#808080">&gt;</span></div><div class="ln" style="left:268.5px;top:338.50px;width:60px;color:#858585">42</div><div class="code" style="left:360.3px;top:362.25px;width:904.7px;overflow:hidden"><span style="color:#d4d4d4">    </span><span style="color:#808080">&lt;/</span><span style="color:#569cd6">div</span><span style="color:#808080">&gt;</span></div><div class="ln" style="left:268.5px;top:362.25px;width:60px;color:#858585">43</div><div class="code" style="left:360.3px;top:386.00px;width:904.7px;overflow:hidden"><span style="color:#d4d4d4">  </span><span style="color:#808080">&lt;/</span><span style="color:#569cd6">nav</span><span style="color:#808080">&gt;</span></div><div class="ln" style="left:268.5px;top:386.00px;width:60px;color:#858585">44</div><div class="code" style="left:360.3px;top:409.75px;width:904.7px;overflow:hidden"><span style="color:#d4d4d4">  </span><span style="color:#6a9955">&lt;!–– end navbar section ––&gt;</span></div><div class="ln" style="left:268.5px;top:409.75px;width:60px;color:#858585">45</div><div class="code" style="left:360.3px;top:433.50px;width:904.7px;overflow:hidden"><span style="color:#d4d4d4"> </span><span style="color:#6a9955">&lt;!–– start header section ––&gt;</span></div><div class="ln" style="left:268.5px;top:433.50px;width:60px;color:#858585">46</div><div class="code" style="left:360.3px;top:457.25px;width:904.7px;overflow:hidden"><span style="color:#808080">&lt;</span><span style="color:#569cd6">header</span><span style="color:#d4d4d4"> </span><span style="color:#9cdcfe">class</span><span style="color:#d4d4d4">=</span><span style="color:#ce9178">"container–fluid"</span><span style="color:#808080">&gt;</span></div><div class="ln" style="left:268.5px;top:457.25px;width:60px;color:#858585">47</div><div class="code" style="left:360.3px;top:481.00px;width:904.7px;overflow:hidden"><span style="color:#d4d4d4">  </span><span style="color:#808080">&lt;</span><span style="color:#569cd6">div</span><span style="color:#d4d4d4"> </span><span style="color:#9cdcfe">class</span><span style="color:#d4d4d4">=</span><span style="color:#ce9178">"row"</span><span style="color:#808080">&gt;</span></div><div class="ln" style="left:268.5px;top:481.00px;width:60px;color:#858585">48</div><div class="code" style="left:360.3px;top:504.75px;width:904.7px;overflow:hidden"><span style="color:#d4d4d4">    </span><span style="color:#808080">&lt;</span><span style="color:#569cd6">div</span><span style="color:#d4d4d4"> </span><span style="color:#9cdcfe">class</span><span style="color:#d4d4d4">=</span><span style="color:#ce9178">"col–xs–12 col–s–12–col–m–12 col–l–12 col–xl–12"</span><span style="color:#808080">&gt;</span></div><div class="ln" style="left:268.5px;top:504.75px;width:60px;color:#858585">49</div><div class="code" style="left:360.3px;top:528.50px;width:904.7px;overflow:hidden"><span style="color:#d4d4d4">      </span><span style="color:#808080">&lt;</span><span style="color:#569cd6">figure</span><span style="color:#808080">&gt;</span></div><div class="ln" style="left:268.5px;top:528.50px;width:60px;color:#858585">50</div><div class="code" style="left:360.3px;top:552.25px;width:904.7px;overflow:hidden"><span style="color:#d4d4d4">        </span><span style="color:#808080">&lt;</span><span style="color:#569cd6">img</span><span style="color:#d4d4d4"> </span><span style="color:#9cdcfe">src</span><span style="color:#d4d4d4">=</span><span style="color:#ce9178">"</span><span style="color:#ce9178;text-decoration:underline;text-underline-offset:5px;text-decoration-thickness:1px">assets/img/6.jpg</span><span style="color:#ce9178">"</span><span style="color:#d4d4d4"> </span><span style="color:#9cdcfe">alt</span><span style="color:#d4d4d4">=</span><span style="color:#ce9178">""</span><span style="color:#808080">&gt;</span></div><div class="ln" style="left:268.5px;top:552.25px;width:60px;color:#858585">51</div><div class="code" style="left:360.3px;top:576.00px;width:904.7px;overflow:hidden"><span style="color:#d4d4d4">      </span><span style="color:#808080">&lt;/</span><span style="color:#569cd6">figure</span><span style="color:#808080">&gt;</span></div><div class="ln" style="left:268.5px;top:576.00px;width:60px;color:#858585">52</div><div class="code" style="left:360.3px;top:599.75px;width:904.7px;overflow:hidden"><span style="color:#d4d4d4">    </span><span style="color:#808080">&lt;/</span><span style="color:#569cd6">div</span><span style="color:#808080">&gt;</span></div><div class="ln" style="left:268.5px;top:599.75px;width:60px;color:#858585">53</div><div class="code" style="left:360.3px;top:623.50px;width:904.7px;overflow:hidden"><span style="color:#d4d4d4">  </span><span style="color:#808080">&lt;/</span><span style="color:#569cd6">div</span><span style="color:#808080">&gt;</span></div><div class="ln" style="left:268.5px;top:623.50px;width:60px;color:#858585">54</div><div class="code" style="left:360.3px;top:647.25px;width:904.7px;overflow:hidden"><span style="color:#808080">&lt;/</span><span style="color:#569cd6">header</span><span style="color:#808080">&gt;</span></div><div class="ln" style="left:268.5px;top:647.25px;width:60px;color:#858585">55</div><div class="code" style="left:360.3px;top:671.00px;width:904.7px;overflow:hidden"><span style="color:#d4d4d4">  </span><span style="color:#6a9955">&lt;!–– end header section ––&gt;</span></div><div class="ln" style="left:268.5px;top:671.00px;width:60px;color:#858585">56</div><div class="code" style="left:360.3px;top:694.75px;width:904.7px;overflow:hidden"><span style="color:#d4d4d4">  </span><span style="color:#808080">&lt;</span><span style="color:#569cd6">script</span><span style="color:#d4d4d4"> </span><span style="color:#9cdcfe">src</span><span style="color:#d4d4d4">=</span><span style="color:#ce9178">"</span><span style="color:#ce9178;text-decoration:underline;text-underline-offset:5px;text-decoration-thickness:1px">assets/js/main.js</span><span style="color:#ce9178">"</span><span style="color:#808080">&gt;</span><span style="color:#808080">&lt;/</span><span style="color:#569cd6">script</span><span style="color:#808080">&gt;</span></div><div class="ln" style="left:268.5px;top:694.75px;width:60px;color:#858585">57</div><div class="code" style="left:360.3px;top:718.50px;width:904.7px;overflow:hidden"><span style="color:#808080">&lt;/</span><span style="color:#569cd6">body</span><span style="color:#808080">&gt;</span></div><div class="ln" style="left:268.5px;top:718.50px;width:60px;color:#858585">58</div><div class="code" style="left:360.3px;top:742.25px;width:904.7px;overflow:hidden"></div><div class="ln" style="left:268.5px;top:742.25px;width:60px;color:#858585">59</div><div class="code" style="left:360.3px;top:766.00px;width:904.7px;overflow:hidden"><span style="color:#808080">&lt;/</span><span style="color:#569cd6">html</span><span style="color:#808080">&gt;</span></div><div class="ln" style="left:268.5px;top:766.00px;width:60px;color:#c6c6c6">60</div><div class="a" style="left:431.00px;top:766.00px;width:2.00px;height:23.75px;background:#aeafad;"></div><div class="a" style="left:273.00px;top:115.00px;width:992.00px;height:118.75px;background:#1e1e1e;"></div><div class="code" style="left:360.3px;top:115.00px;width:904.7px;overflow:hidden"><span style="color:#808080">&lt;</span><span style="color:#569cd6">html</span><span style="color:#d4d4d4"> </span><span style="color:#9cdcfe">lang</span><span style="color:#d4d4d4">=</span><span style="color:#ce9178">"fa"</span><span style="color:#808080">&gt;</span></div><div class="ln" style="left:268.5px;top:115.00px;width:60px;color:#858585">2</div><div class="code" style="left:360.3px;top:138.75px;width:904.7px;overflow:hidden"><span style="color:#808080">&lt;</span><span style="color:#569cd6">body</span><span style="color:#808080">&gt;</span></div><div class="ln" style="left:268.5px;top:138.75px;width:60px;color:#858585">13</div><div class="code" style="left:360.3px;top:162.50px;width:904.7px;overflow:hidden"><span style="color:#d4d4d4">  </span><span style="color:#808080">&lt;</span><span style="color:#569cd6">nav</span><span style="color:#d4d4d4"> </span><span style="color:#9cdcfe">class</span><span style="color:#d4d4d4">=</span><span style="color:#ce9178">"nav"</span><span style="color:#d4d4d4"> </span><span style="color:#9cdcfe">id</span><span style="color:#d4d4d4">=</span><span style="color:#ce9178">"mynav"</span><span style="color:#808080">&gt;</span></div><div class="ln" style="left:268.5px;top:162.50px;width:60px;color:#858585">31</div><div class="code" style="left:360.3px;top:186.25px;width:904.7px;overflow:hidden"><span style="color:#d4d4d4">    </span><span style="color:#808080">&lt;</span><span style="color:#569cd6">div</span><span style="color:#d4d4d4"> </span><span style="color:#9cdcfe">class</span><span style="color:#d4d4d4">=</span><span style="color:#ce9178">"container"</span><span style="color:#808080">&gt;</span></div><div class="ln" style="left:268.5px;top:186.25px;width:60px;color:#858585">32</div><div class="code" style="left:360.3px;top:210.00px;width:904.7px;overflow:hidden"><span style="color:#d4d4d4">      </span><span style="color:#808080">&lt;</span><span style="color:#569cd6">div</span><span style="color:#d4d4d4"> </span><span style="color:#9cdcfe">class</span><span style="color:#d4d4d4">=</span><span style="color:#ce9178">"row"</span><span style="color:#808080">&gt;</span></div><div class="ln" style="left:268.5px;top:210.00px;width:60px;color:#858585">33</div><div class="a" style="left:275px;top:233.5px;width:990px;height:4px;background:linear-gradient(#000000f0,#000000a0 40%,#00000000)"></div><div class="a" style="left:1265.00px;top:115.00px;width:99.00px;height:878.00px;background:#1e1e1e;"></div><div class="a" style="left:1258px;top:115.0px;width:7px;height:878.0px;background:linear-gradient(90deg,#00000000,#000000b0)"></div><div class="a" style="left:1273.0px;top:115px;width:1.0px;height:1.3px;background:#808080;opacity:.5"></div><div class="a" style="left:1274.0px;top:115px;width:8.0px;height:1.3px;background:#569cd6;opacity:.5"></div><div class="a" style="left:1283.0px;top:115px;width:4.0px;height:1.3px;background:#9cdcfe;opacity:.5"></div><div class="a" style="left:1287.0px;top:115px;width:1.0px;height:1.3px;background:#808080;opacity:.5"></div><div class="a" style="left:1273.0px;top:117px;width:1.0px;height:1.3px;background:#808080;opacity:.5"></div><div class="a" style="left:1274.0px;top:117px;width:4.0px;height:1.3px;background:#569cd6;opacity:.5"></div><div class="a" style="left:1279.0px;top:117px;width:4.0px;height:1.3px;background:#9cdcfe;opacity:.5"></div><div class="a" style="left:1283.0px;top:117px;width:1.0px;height:1.3px;background:#d4d4d4;opacity:.5"></div><div class="a" style="left:1284.0px;top:117px;width:4.0px;height:1.3px;background:#ce9178;opacity:.5"></div><div class="a" style="left:1288.0px;top:117px;width:1.0px;height:1.3px;background:#808080;opacity:.5"></div><div class="a" style="left:1273.0px;top:121px;width:1.0px;height:1.3px;background:#808080;opacity:.5"></div><div class="a" style="left:1274.0px;top:121px;width:4.0px;height:1.3px;background:#569cd6;opacity:.5"></div><div class="a" style="left:1278.0px;top:121px;width:1.0px;height:1.3px;background:#808080;opacity:.5"></div><div class="a" style="left:1275.0px;top:123px;width:1.0px;height:1.3px;background:#808080;opacity:.5"></div><div class="a" style="left:1276.0px;top:123px;width:4.0px;height:1.3px;background:#569cd6;opacity:.5"></div><div class="a" style="left:1281.0px;top:123px;width:7.0px;height:1.3px;background:#9cdcfe;opacity:.5"></div><div class="a" style="left:1288.0px;top:123px;width:1.0px;height:1.3px;background:#d4d4d4;opacity:.5"></div><div class="a" style="left:1289.0px;top:123px;width:7.0px;height:1.3px;background:#ce9178;opacity:.5"></div><div class="a" style="left:1296.0px;top:123px;width:1.0px;height:1.3px;background:#808080;opacity:.5"></div><div class="a" style="left:1275.0px;top:125px;width:1.0px;height:1.3px;background:#808080;opacity:.5"></div><div class="a" style="left:1276.0px;top:125px;width:4.0px;height:1.3px;background:#569cd6;opacity:.5"></div><div class="a" style="left:1281.0px;top:125px;width:4.0px;height:1.3px;background:#9cdcfe;opacity:.5"></div><div class="a" style="left:1285.0px;top:125px;width:1.0px;height:1.3px;background:#d4d4d4;opacity:.5"></div><div class="a" style="left:1286.0px;top:125px;width:10.0px;height:1.3px;background:#ce9178;opacity:.5"></div><div class="a" style="left:1297.0px;top:125px;width:7.0px;height:1.3px;background:#9cdcfe;opacity:.5"></div><div class="a" style="left:1304.0px;top:125px;width:1.0px;height:1.3px;background:#d4d4d4;opacity:.5"></div><div class="a" style="left:1305.0px;top:125px;width:20.0px;height:1.3px;background:#ce9178;opacity:.5"></div><div class="a" style="left:1326.0px;top:125px;width:18.0px;height:1.3px;background:#ce9178;opacity:.5"></div><div class="a" style="left:1344.0px;top:125px;width:1.0px;height:1.3px;background:#808080;opacity:.5"></div><div class="a" style="left:1275.0px;top:127px;width:1.0px;height:1.3px;background:#808080;opacity:.5"></div><div class="a" style="left:1276.0px;top:127px;width:5.0px;height:1.3px;background:#569cd6;opacity:.5"></div><div class="a" style="left:1281.0px;top:127px;width:1.0px;height:1.3px;background:#808080;opacity:.5"></div><div class="a" style="left:1282.0px;top:127px;width:8.0px;height:1.3px;background:#d4d4d4;opacity:.5"></div><div class="a" style="left:1290.0px;top:127px;width:2.0px;height:1.3px;background:#808080;opacity:.5"></div><div class="a" style="left:1292.0px;top:127px;width:5.0px;height:1.3px;background:#569cd6;opacity:.5"></div><div class="a" style="left:1297.0px;top:127px;width:1.0px;height:1.3px;background:#808080;opacity:.5"></div><div class="a" style="left:1275.0px;top:129px;width:1.0px;height:1.3px;background:#808080;opacity:.5"></div><div class="a" style="left:1276.0px;top:129px;width:4.0px;height:1.3px;background:#569cd6;opacity:.5"></div><div class="a" style="left:1281.0px;top:129px;width:3.0px;height:1.3px;background:#9cdcfe;opacity:.5"></div><div class="a" style="left:1284.0px;top:129px;width:1.0px;height:1.3px;background:#d4d4d4;opacity:.5"></div><div class="a" style="left:1285.0px;top:129px;width:12.0px;height:1.3px;background:#ce9178;opacity:.5"></div><div class="a" style="left:1298.0px;top:129px;width:4.0px;height:1.3px;background:#9cdcfe;opacity:.5"></div><div class="a" style="left:1302.0px;top:129px;width:1.0px;height:1.3px;background:#d4d4d4;opacity:.5"></div><div class="a" style="left:1303.0px;top:129px;width:60.0px;height:1.3px;background:#ce9178;opacity:.5"></div><div class="a" style="left:1275.0px;top:131px;width:1.0px;height:1.3px;background:#808080;opacity:.5"></div><div class="a" style="left:1276.0px;top:131px;width:4.0px;height:1.3px;background:#569cd6;opacity:.5"></div><div class="a" style="left:1281.0px;top:131px;width:3.0px;height:1.3px;background:#9cdcfe;opacity:.5"></div><div class="a" style="left:1284.0px;top:131px;width:1.0px;height:1.3px;background:#d4d4d4;opacity:.5"></div><div class="a" style="left:1285.0px;top:131px;width:12.0px;height:1.3px;background:#ce9178;opacity:.5"></div><div class="a" style="left:1298.0px;top:131px;width:4.0px;height:1.3px;background:#9cdcfe;opacity:.5"></div><div class="a" style="left:1302.0px;top:131px;width:1.0px;height:1.3px;background:#d4d4d4;opacity:.5"></div><div class="a" style="left:1303.0px;top:131px;width:27.0px;height:1.3px;background:#ce9178;opacity:.5"></div><div class="a" style="left:1330.0px;top:131px;width:1.0px;height:1.3px;background:#808080;opacity:.5"></div><div class="a" style="left:1275.0px;top:133px;width:1.0px;height:1.3px;background:#808080;opacity:.5"></div><div class="a" style="left:1276.0px;top:133px;width:4.0px;height:1.3px;background:#569cd6;opacity:.5"></div><div class="a" style="left:1281.0px;top:133px;width:3.0px;height:1.3px;background:#9cdcfe;opacity:.5"></div><div class="a" style="left:1284.0px;top:133px;width:1.0px;height:1.3px;background:#d4d4d4;opacity:.5"></div><div class="a" style="left:1285.0px;top:133px;width:12.0px;height:1.3px;background:#ce9178;opacity:.5"></div><div class="a" style="left:1298.0px;top:133px;width:4.0px;height:1.3px;background:#9cdcfe;opacity:.5"></div><div class="a" style="left:1302.0px;top:133px;width:1.0px;height:1.3px;background:#d4d4d4;opacity:.5"></div><div class="a" style="left:1303.0px;top:133px;width:22.0px;height:1.3px;background:#ce9178;opacity:.5"></div><div class="a" style="left:1325.0px;top:133px;width:1.0px;height:1.3px;background:#808080;opacity:.5"></div><div class="a" style="left:1273.0px;top:135px;width:2.0px;height:1.3px;background:#808080;opacity:.5"></div><div class="a" style="left:1275.0px;top:135px;width:4.0px;height:1.3px;background:#569cd6;opacity:.5"></div><div class="a" style="left:1279.0px;top:135px;width:1.0px;height:1.3px;background:#808080;opacity:.5"></div><div class="a" style="left:1273.0px;top:139px;width:1.0px;height:1.3px;background:#808080;opacity:.5"></div><div class="a" style="left:1274.0px;top:139px;width:4.0px;height:1.3px;background:#569cd6;opacity:.5"></div><div class="a" style="left:1278.0px;top:139px;width:1.0px;height:1.3px;background:#808080;opacity:.5"></div><div class="a" style="left:1275.0px;top:141px;width:1.0px;height:1.3px;background:#808080;opacity:.5"></div><div class="a" style="left:1276.0px;top:141px;width:3.0px;height:1.3px;background:#569cd6;opacity:.5"></div><div class="a" style="left:1280.0px;top:141px;width:5.0px;height:1.3px;background:#9cdcfe;opacity:.5"></div><div class="a" style="left:1285.0px;top:141px;width:1.0px;height:1.3px;background:#d4d4d4;opacity:.5"></div><div class="a" style="left:1286.0px;top:141px;width:9.0px;height:1.3px;background:#ce9178;opacity:.5"></div><div class="a" style="left:1296.0px;top:141px;width:2.0px;height:1.3px;background:#9cdcfe;opacity:.5"></div><div class="a" style="left:1298.0px;top:141px;width:1.0px;height:1.3px;background:#d4d4d4;opacity:.5"></div><div class="a" style="left:1299.0px;top:141px;width:11.0px;height:1.3px;background:#ce9178;opacity:.5"></div><div class="a" style="left:1311.0px;top:141px;width:3.0px;height:1.3px;background:#9cdcfe;opacity:.5"></div><div class="a" style="left:1314.0px;top:141px;width:1.0px;height:1.3px;background:#d4d4d4;opacity:.5"></div><div class="a" style="left:1315.0px;top:141px;width:5.0px;height:1.3px;background:#ce9178;opacity:.5"></div><div class="a" style="left:1320.0px;top:141px;width:1.0px;height:1.3px;background:#808080;opacity:.5"></div><div class="a" style="left:1277.0px;top:143px;width:1.0px;height:1.3px;background:#808080;opacity:.5"></div><div class="a" style="left:1278.0px;top:143px;width:3.0px;height:1.3px;background:#569cd6;opacity:.5"></div><div class="a" style="left:1282.0px;top:143px;width:5.0px;height:1.3px;background:#9cdcfe;opacity:.5"></div><div class="a" style="left:1287.0px;top:143px;width:1.0px;height:1.3px;background:#d4d4d4;opacity:.5"></div><div class="a" style="left:1288.0px;top:143px;width:5.0px;height:1.3px;background:#ce9178;opacity:.5"></div><div class="a" style="left:1293.0px;top:143px;width:1.0px;height:1.3px;background:#808080;opacity:.5"></div><div class="a" style="left:1279.0px;top:145px;width:1.0px;height:1.3px;background:#808080;opacity:.5"></div><div class="a" style="left:1280.0px;top:145px;width:3.0px;height:1.3px;background:#569cd6;opacity:.5"></div><div class="a" style="left:1284.0px;top:145px;width:5.0px;height:1.3px;background:#9cdcfe;opacity:.5"></div><div class="a" style="left:1289.0px;top:145px;width:1.0px;height:1.3px;background:#d4d4d4;opacity:.5"></div><div class="a" style="left:1290.0px;top:145px;width:10.0px;height:1.3px;background:#ce9178;opacity:.5"></div><div class="a" style="left:1300.0px;top:145px;width:1.0px;height:1.3px;background:#808080;opacity:.5"></div><div class="a" style="left:1281.0px;top:147px;width:1.0px;height:1.3px;background:#808080;opacity:.5"></div><div class="a" style="left:1282.0px;top:147px;width:3.0px;height:1.3px;background:#569cd6;opacity:.5"></div><div class="a" style="left:1286.0px;top:147px;width:5.0px;height:1.3px;background:#9cdcfe;opacity:.5"></div><div class="a" style="left:1291.0px;top:147px;width:1.0px;height:1.3px;background:#d4d4d4;opacity:.5"></div><div class="a" style="left:1292.0px;top:147px;width:10.0px;height:1.3px;background:#ce9178;opacity:.5"></div><div class="a" style="left:1303.0px;top:147px;width:8.0px;height:1.3px;background:#ce9178;opacity:.5"></div><div class="a" style="left:1312.0px;top:147px;width:8.0px;height:1.3px;background:#ce9178;opacity:.5"></div><div class="a" style="left:1321.0px;top:147px;width:8.0px;height:1.3px;background:#ce9178;opacity:.5"></div><div class="a" style="left:1330.0px;top:147px;width:9.0px;height:1.3px;background:#ce9178;opacity:.5"></div><div class="a" style="left:1340.0px;top:147px;width:5.0px;height:1.3px;background:#ce9178;opacity:.5"></div><div class="a" style="left:1345.0px;top:147px;width:1.0px;height:1.3px;background:#808080;opacity:.5"></div><div class="a" style="left:1283.0px;top:149px;width:1.0px;height:1.3px;background:#808080;opacity:.5"></div><div class="a" style="left:1284.0px;top:149px;width:1.0px;height:1.3px;background:#569cd6;opacity:.5"></div><div class="a" style="left:1286.0px;top:149px;width:4.0px;height:1.3px;background:#9cdcfe;opacity:.5"></div><div class="a" style="left:1290.0px;top:149px;width:1.0px;height:1.3px;background:#d4d4d4;opacity:.5"></div><div class="a" style="left:1291.0px;top:149px;width:20.0px;height:1.3px;background:#ce9178;opacity:.5"></div><div class="a" style="left:1312.0px;top:149px;width:5.0px;height:1.3px;background:#9cdcfe;opacity:.5"></div><div class="a" style="left:1317.0px;top:149px;width:1.0px;height:1.3px;background:#d4d4d4;opacity:.5"></div><div class="a" style="left:1318.0px;top:149px;width:10.0px;height:1.3px;background:#ce9178;opacity:.5"></div><div class="a" style="left:1329.0px;top:149px;width:7.0px;height:1.3px;background:#9cdcfe;opacity:.5"></div><div class="a" style="left:1336.0px;top:149px;width:1.0px;height:1.3px;background:#d4d4d4;opacity:.5"></div><div class="a" style="left:1337.0px;top:149px;width:12.0px;height:1.3px;background:#ce9178;opacity:.5"></div><div class="a" style="left:1349.0px;top:149px;width:1.0px;height:1.3px;background:#808080;opacity:.5"></div><div class="a" style="left:1350.0px;top:149px;width:7.0px;height:1.3px;background:#d4d4d4;opacity:.5"></div><div class="a" style="left:1357.0px;top:149px;width:2.0px;height:1.3px;background:#808080;opacity:.5"></div><div class="a" style="left:1359.0px;top:149px;width:1.0px;height:1.3px;background:#569cd6;opacity:.5"></div><div class="a" style="left:1360.0px;top:149px;width:1.0px;height:1.3px;background:#808080;opacity:.5"></div><div class="a" style="left:1283.0px;top:151px;width:1.0px;height:1.3px;background:#808080;opacity:.5"></div><div class="a" style="left:1284.0px;top:151px;width:1.0px;height:1.3px;background:#569cd6;opacity:.5"></div><div class="a" style="left:1286.0px;top:151px;width:4.0px;height:1.3px;background:#9cdcfe;opacity:.5"></div><div class="a" style="left:1290.0px;top:151px;width:1.0px;height:1.3px;background:#d4d4d4;opacity:.5"></div><div class="a" style="left:1291.0px;top:151px;width:3.0px;height:1.3px;background:#ce9178;opacity:.5"></div><div class="a" style="left:1295.0px;top:151px;width:5.0px;height:1.3px;background:#9cdcfe;opacity:.5"></div><div class="a" style="left:1300.0px;top:151px;width:1.0px;height:1.3px;background:#d4d4d4;opacity:.5"></div><div class="a" style="left:1301.0px;top:151px;width:6.0px;height:1.3px;background:#ce9178;opacity:.5"></div><div class="a" style="left:1307.0px;top:151px;width:1.0px;height:1.3px;background:#808080;opacity:.5"></div><div class="a" style="left:1308.0px;top:151px;width:1.0px;height:1.3px;background:#808080;opacity:.5"></div><div class="a" style="left:1309.0px;top:151px;width:3.0px;height:1.3px;background:#569cd6;opacity:.5"></div><div class="a" style="left:1313.0px;top:151px;width:3.0px;height:1.3px;background:#9cdcfe;opacity:.5"></div><div class="a" style="left:1316.0px;top:151px;width:1.0px;height:1.3px;background:#d4d4d4;opacity:.5"></div><div class="a" style="left:1317.0px;top:151px;width:7.0px;height:1.3px;background:#ce9178;opacity:.5"></div><div class="a" style="left:1325.0px;top:151px;width:3.0px;height:1.3px;background:#9cdcfe;opacity:.5"></div><div class="a" style="left:1328.0px;top:151px;width:1.0px;height:1.3px;background:#d4d4d4;opacity:.5"></div><div class="a" style="left:1329.0px;top:151px;width:2.0px;height:1.3px;background:#ce9178;opacity:.5"></div><div class="a" style="left:1331.0px;top:151px;width:1.0px;height:1.3px;background:#808080;opacity:.5"></div><div class="a" style="left:1332.0px;top:151px;width:2.0px;height:1.3px;background:#808080;opacity:.5"></div><div class="a" style="left:1334.0px;top:151px;width:1.0px;height:1.3px;background:#569cd6;opacity:.5"></div><div class="a" style="left:1335.0px;top:151px;width:1.0px;height:1.3px;background:#808080;opacity:.5"></div><div class="a" style="left:1281.0px;top:153px;width:2.0px;height:1.3px;background:#808080;opacity:.5"></div><div class="a" style="left:1283.0px;top:153px;width:3.0px;height:1.3px;background:#569cd6;opacity:.5"></div><div class="a" style="left:1286.0px;top:153px;width:1.0px;height:1.3px;background:#808080;opacity:.5"></div><div class="a" style="left:1281.0px;top:155px;width:1.0px;height:1.3px;background:#808080;opacity:.5"></div><div class="a" style="left:1282.0px;top:155px;width:3.0px;height:1.3px;background:#569cd6;opacity:.5"></div><div class="a" style="left:1286.0px;top:155px;width:5.0px;height:1.3px;background:#9cdcfe;opacity:.5"></div><div class="a" style="left:1291.0px;top:155px;width:1.0px;height:1.3px;background:#d4d4d4;opacity:.5"></div><div class="a" style="left:1292.0px;top:155px;width:10.0px;height:1.3px;background:#ce9178;opacity:.5"></div><div class="a" style="left:1303.0px;top:155px;width:8.0px;height:1.3px;background:#ce9178;opacity:.5"></div><div class="a" style="left:1312.0px;top:155px;width:8.0px;height:1.3px;background:#ce9178;opacity:.5"></div><div class="a" style="left:1321.0px;top:155px;width:8.0px;height:1.3px;background:#ce9178;opacity:.5"></div><div class="a" style="left:1330.0px;top:155px;width:9.0px;height:1.3px;background:#ce9178;opacity:.5"></div><div class="a" style="left:1340.0px;top:155px;width:11.0px;height:1.3px;background:#ce9178;opacity:.5"></div><div class="a" style="left:1351.0px;top:155px;width:1.0px;height:1.3px;background:#808080;opacity:.5"></div><div class="a" style="left:1283.0px;top:157px;width:1.0px;height:1.3px;background:#808080;opacity:.5"></div><div class="a" style="left:1284.0px;top:157px;width:1.0px;height:1.3px;background:#569cd6;opacity:.5"></div><div class="a" style="left:1286.0px;top:157px;width:4.0px;height:1.3px;background:#9cdcfe;opacity:.5"></div><div class="a" style="left:1290.0px;top:157px;width:1.0px;height:1.3px;background:#d4d4d4;opacity:.5"></div><div class="a" style="left:1291.0px;top:157px;width:2.0px;height:1.3px;background:#ce9178;opacity:.5"></div><div class="a" style="left:1293.0px;top:157px;width:1.0px;height:1.3px;background:#808080;opacity:.5"></div><div class="a" style="left:1294.0px;top:157px;width:1.0px;height:1.3px;background:#808080;opacity:.5"></div><div class="a" style="left:1295.0px;top:157px;width:1.0px;height:1.3px;background:#569cd6;opacity:.5"></div><div class="a" style="left:1297.0px;top:157px;width:5.0px;height:1.3px;background:#9cdcfe;opacity:.5"></div><div class="a" style="left:1302.0px;top:157px;width:1.0px;height:1.3px;background:#d4d4d4;opacity:.5"></div><div class="a" style="left:1303.0px;top:157px;width:9.0px;height:1.3px;background:#ce9178;opacity:.5"></div><div class="a" style="left:1313.0px;top:157px;width:9.0px;height:1.3px;background:#ce9178;opacity:.5"></div><div class="a" style="left:1322.0px;top:157px;width:1.0px;height:1.3px;background:#808080;opacity:.5"></div><div class="a" style="left:1323.0px;top:157px;width:2.0px;height:1.3px;background:#808080;opacity:.5"></div><div class="a" style="left:1325.0px;top:157px;width:1.0px;height:1.3px;background:#569cd6;opacity:.5"></div><div class="a" style="left:1326.0px;top:157px;width:1.0px;height:1.3px;background:#808080;opacity:.5"></div><div class="a" style="left:1327.0px;top:157px;width:4.0px;height:1.3px;background:#d4d4d4;opacity:.5"></div><div class="a" style="left:1331.0px;top:157px;width:2.0px;height:1.3px;background:#808080;opacity:.5"></div><div class="a" style="left:1333.0px;top:157px;width:1.0px;height:1.3px;background:#569cd6;opacity:.5"></div><div class="a" style="left:1334.0px;top:157px;width:1.0px;height:1.3px;background:#808080;opacity:.5"></div><div class="a" style="left:1283.0px;top:159px;width:1.0px;height:1.3px;background:#808080;opacity:.5"></div><div class="a" style="left:1284.0px;top:159px;width:1.0px;height:1.3px;background:#569cd6;opacity:.5"></div><div class="a" style="left:1286.0px;top:159px;width:4.0px;height:1.3px;background:#9cdcfe;opacity:.5"></div><div class="a" style="left:1290.0px;top:159px;width:1.0px;height:1.3px;background:#d4d4d4;opacity:.5"></div><div class="a" style="left:1291.0px;top:159px;width:2.0px;height:1.3px;background:#ce9178;opacity:.5"></div><div class="a" style="left:1293.0px;top:159px;width:1.0px;height:1.3px;background:#808080;opacity:.5"></div><div class="a" style="left:1294.0px;top:159px;width:1.0px;height:1.3px;background:#808080;opacity:.5"></div><div class="a" style="left:1295.0px;top:159px;width:1.0px;height:1.3px;background:#569cd6;opacity:.5"></div><div class="a" style="left:1297.0px;top:159px;width:5.0px;height:1.3px;background:#9cdcfe;opacity:.5"></div><div class="a" style="left:1302.0px;top:159px;width:1.0px;height:1.3px;background:#d4d4d4;opacity:.5"></div><div class="a" style="left:1303.0px;top:159px;width:9.0px;height:1.3px;background:#ce9178;opacity:.5"></div><div class="a" style="left:1313.0px;top:159px;width:8.0px;height:1.3px;background:#ce9178;opacity:.5"></div><div class="a" style="left:1321.0px;top:159px;width:1.0px;height:1.3px;background:#808080;opacity:.5"></div><div class="a" style="left:1322.0px;top:159px;width:2.0px;height:1.3px;background:#808080;opacity:.5"></div><div class="a" style="left:1324.0px;top:159px;width:1.0px;height:1.3px;background:#569cd6;opacity:.5"></div><div class="a" style="left:1325.0px;top:159px;width:1.0px;height:1.3px;background:#808080;opacity:.5"></div><div class="a" style="left:1326.0px;top:159px;width:6.0px;height:1.3px;background:#d4d4d4;opacity:.5"></div><div class="a" style="left:1332.0px;top:159px;width:2.0px;height:1.3px;background:#808080;opacity:.5"></div><div class="a" style="left:1334.0px;top:159px;width:1.0px;height:1.3px;background:#569cd6;opacity:.5"></div><div class="a" style="left:1335.0px;top:159px;width:1.0px;height:1.3px;background:#808080;opacity:.5"></div><div class="a" style="left:1283.0px;top:161px;width:1.0px;height:1.3px;background:#808080;opacity:.5"></div><div class="a" style="left:1284.0px;top:161px;width:1.0px;height:1.3px;background:#569cd6;opacity:.5"></div><div class="a" style="left:1286.0px;top:161px;width:4.0px;height:1.3px;background:#9cdcfe;opacity:.5"></div><div class="a" style="left:1290.0px;top:161px;width:1.0px;height:1.3px;background:#d4d4d4;opacity:.5"></div><div class="a" style="left:1291.0px;top:161px;width:2.0px;height:1.3px;background:#ce9178;opacity:.5"></div><div class="a" style="left:1294.0px;top:161px;width:5.0px;height:1.3px;background:#9cdcfe;opacity:.5"></div><div class="a" style="left:1299.0px;top:161px;width:1.0px;height:1.3px;background:#d4d4d4;opacity:.5"></div><div class="a" style="left:1300.0px;top:161px;width:2.0px;height:1.3px;background:#ce9178;opacity:.5"></div><div class="a" style="left:1302.0px;top:161px;width:1.0px;height:1.3px;background:#808080;opacity:.5"></div><div class="a" style="left:1303.0px;top:161px;width:1.0px;height:1.3px;background:#808080;opacity:.5"></div><div class="a" style="left:1304.0px;top:161px;width:1.0px;height:1.3px;background:#569cd6;opacity:.5"></div><div class="a" style="left:1306.0px;top:161px;width:5.0px;height:1.3px;background:#9cdcfe;opacity:.5"></div><div class="a" style="left:1311.0px;top:161px;width:1.0px;height:1.3px;background:#d4d4d4;opacity:.5"></div><div class="a" style="left:1312.0px;top:161px;width:9.0px;height:1.3px;background:#ce9178;opacity:.5"></div><div class="a" style="left:1322.0px;top:161px;width:14.0px;height:1.3px;background:#ce9178;opacity:.5"></div><div class="a" style="left:1336.0px;top:161px;width:1.0px;height:1.3px;background:#808080;opacity:.5"></div><div class="a" style="left:1337.0px;top:161px;width:2.0px;height:1.3px;background:#808080;opacity:.5"></div><div class="a" style="left:1339.0px;top:161px;width:1.0px;height:1.3px;background:#569cd6;opacity:.5"></div><div class="a" style="left:1340.0px;top:161px;width:1.0px;height:1.3px;background:#808080;opacity:.5"></div><div class="a" style="left:1341.0px;top:161px;width:4.0px;height:1.3px;background:#d4d4d4;opacity:.5"></div><div class="a" style="left:1346.0px;top:161px;width:2.0px;height:1.3px;background:#d4d4d4;opacity:.5"></div><div class="a" style="left:1348.0px;top:161px;width:2.0px;height:1.3px;background:#808080;opacity:.5"></div><div class="a" style="left:1350.0px;top:161px;width:1.0px;height:1.3px;background:#569cd6;opacity:.5"></div><div class="a" style="left:1351.0px;top:161px;width:1.0px;height:1.3px;background:#808080;opacity:.5"></div><div class="a" style="left:1283.0px;top:163px;width:1.0px;height:1.3px;background:#808080;opacity:.5"></div><div class="a" style="left:1284.0px;top:163px;width:1.0px;height:1.3px;background:#569cd6;opacity:.5"></div><div class="a" style="left:1286.0px;top:163px;width:4.0px;height:1.3px;background:#9cdcfe;opacity:.5"></div><div class="a" style="left:1290.0px;top:163px;width:1.0px;height:1.3px;background:#d4d4d4;opacity:.5"></div><div class="a" style="left:1291.0px;top:163px;width:2.0px;height:1.3px;background:#ce9178;opacity:.5"></div><div class="a" style="left:1294.0px;top:163px;width:5.0px;height:1.3px;background:#9cdcfe;opacity:.5"></div><div class="a" style="left:1299.0px;top:163px;width:1.0px;height:1.3px;background:#d4d4d4;opacity:.5"></div><div class="a" style="left:1300.0px;top:163px;width:2.0px;height:1.3px;background:#ce9178;opacity:.5"></div><div class="a" style="left:1302.0px;top:163px;width:1.0px;height:1.3px;background:#808080;opacity:.5"></div><div class="a" style="left:1303.0px;top:163px;width:1.0px;height:1.3px;background:#808080;opacity:.5"></div><div class="a" style="left:1304.0px;top:163px;width:1.0px;height:1.3px;background:#569cd6;opacity:.5"></div><div class="a" style="left:1306.0px;top:163px;width:5.0px;height:1.3px;background:#9cdcfe;opacity:.5"></div><div class="a" style="left:1311.0px;top:163px;width:1.0px;height:1.3px;background:#d4d4d4;opacity:.5"></div><div class="a" style="left:1312.0px;top:163px;width:9.0px;height:1.3px;background:#ce9178;opacity:.5"></div><div class="a" style="left:1322.0px;top:163px;width:9.0px;height:1.3px;background:#ce9178;opacity:.5"></div><div class="a" style="left:1331.0px;top:163px;width:1.0px;height:1.3px;background:#808080;opacity:.5"></div><div class="a" style="left:1332.0px;top:163px;width:2.0px;height:1.3px;background:#808080;opacity:.5"></div><div class="a" style="left:1334.0px;top:163px;width:1.0px;height:1.3px;background:#569cd6;opacity:.5"></div><div class="a" style="left:1335.0px;top:163px;width:1.0px;height:1.3px;background:#808080;opacity:.5"></div><div class="a" style="left:1336.0px;top:163px;width:6.0px;height:1.3px;background:#d4d4d4;opacity:.5"></div><div class="a" style="left:1343.0px;top:163px;width:2.0px;height:1.3px;background:#d4d4d4;opacity:.5"></div><div class="a" style="left:1345.0px;top:163px;width:2.0px;height:1.3px;background:#808080;opacity:.5"></div><div class="a" style="left:1347.0px;top:163px;width:1.0px;height:1.3px;background:#569cd6;opacity:.5"></div><div class="a" style="left:1348.0px;top:163px;width:1.0px;height:1.3px;background:#808080;opacity:.5"></div><div class="a" style="left:1281.0px;top:165px;width:2.0px;height:1.3px;background:#808080;opacity:.5"></div><div class="a" style="left:1283.0px;top:165px;width:3.0px;height:1.3px;background:#569cd6;opacity:.5"></div><div class="a" style="left:1286.0px;top:165px;width:1.0px;height:1.3px;background:#808080;opacity:.5"></div><div class="a" style="left:1279.0px;top:167px;width:2.0px;height:1.3px;background:#808080;opacity:.5"></div><div class="a" style="left:1281.0px;top:167px;width:3.0px;height:1.3px;background:#569cd6;opacity:.5"></div><div class="a" style="left:1284.0px;top:167px;width:1.0px;height:1.3px;background:#808080;opacity:.5"></div><div class="a" style="left:1277.0px;top:169px;width:2.0px;height:1.3px;background:#808080;opacity:.5"></div><div class="a" style="left:1279.0px;top:169px;width:3.0px;height:1.3px;background:#569cd6;opacity:.5"></div><div class="a" style="left:1282.0px;top:169px;width:1.0px;height:1.3px;background:#808080;opacity:.5"></div><div class="a" style="left:1275.0px;top:171px;width:2.0px;height:1.3px;background:#808080;opacity:.5"></div><div class="a" style="left:1277.0px;top:171px;width:3.0px;height:1.3px;background:#569cd6;opacity:.5"></div><div class="a" style="left:1280.0px;top:171px;width:1.0px;height:1.3px;background:#808080;opacity:.5"></div><div class="a" style="left:1275.0px;top:173px;width:4.0px;height:1.3px;background:#6a9955;opacity:.5"></div><div class="a" style="left:1280.0px;top:173px;width:5.0px;height:1.3px;background:#6a9955;opacity:.5"></div><div class="a" style="left:1286.0px;top:173px;width:6.0px;height:1.3px;background:#6a9955;opacity:.5"></div><div class="a" style="left:1293.0px;top:173px;width:7.0px;height:1.3px;background:#6a9955;opacity:.5"></div><div class="a" style="left:1301.0px;top:173px;width:3.0px;height:1.3px;background:#6a9955;opacity:.5"></div><div class="a" style="left:1275.0px;top:175px;width:1.0px;height:1.3px;background:#808080;opacity:.5"></div><div class="a" style="left:1276.0px;top:175px;width:3.0px;height:1.3px;background:#569cd6;opacity:.5"></div><div class="a" style="left:1280.0px;top:175px;width:5.0px;height:1.3px;background:#9cdcfe;opacity:.5"></div><div class="a" style="left:1285.0px;top:175px;width:1.0px;height:1.3px;background:#d4d4d4;opacity:.5"></div><div class="a" style="left:1286.0px;top:175px;width:5.0px;height:1.3px;background:#ce9178;opacity:.5"></div><div class="a" style="left:1292.0px;top:175px;width:2.0px;height:1.3px;background:#9cdcfe;opacity:.5"></div><div class="a" style="left:1294.0px;top:175px;width:1.0px;height:1.3px;background:#d4d4d4;opacity:.5"></div><div class="a" style="left:1295.0px;top:175px;width:7.0px;height:1.3px;background:#ce9178;opacity:.5"></div><div class="a" style="left:1302.0px;top:175px;width:1.0px;height:1.3px;background:#808080;opacity:.5"></div><div class="a" style="left:1277.0px;top:177px;width:1.0px;height:1.3px;background:#808080;opacity:.5"></div><div class="a" style="left:1278.0px;top:177px;width:3.0px;height:1.3px;background:#569cd6;opacity:.5"></div><div class="a" style="left:1282.0px;top:177px;width:5.0px;height:1.3px;background:#9cdcfe;opacity:.5"></div><div class="a" style="left:1287.0px;top:177px;width:1.0px;height:1.3px;background:#d4d4d4;opacity:.5"></div><div class="a" style="left:1288.0px;top:177px;width:11.0px;height:1.3px;background:#ce9178;opacity:.5"></div><div class="a" style="left:1299.0px;top:177px;width:1.0px;height:1.3px;background:#808080;opacity:.5"></div><div class="a" style="left:1279.0px;top:179px;width:1.0px;height:1.3px;background:#808080;opacity:.5"></div><div class="a" style="left:1280.0px;top:179px;width:3.0px;height:1.3px;background:#569cd6;opacity:.5"></div><div class="a" style="left:1284.0px;top:179px;width:5.0px;height:1.3px;background:#9cdcfe;opacity:.5"></div><div class="a" style="left:1289.0px;top:179px;width:1.0px;height:1.3px;background:#d4d4d4;opacity:.5"></div><div class="a" style="left:1290.0px;top:179px;width:5.0px;height:1.3px;background:#ce9178;opacity:.5"></div><div class="a" style="left:1295.0px;top:179px;width:1.0px;height:1.3px;background:#808080;opacity:.5"></div><div class="a" style="left:1281.0px;top:181px;width:1.0px;height:1.3px;background:#808080;opacity:.5"></div><div class="a" style="left:1282.0px;top:181px;width:3.0px;height:1.3px;background:#569cd6;opacity:.5"></div><div class="a" style="left:1286.0px;top:181px;width:5.0px;height:1.3px;background:#9cdcfe;opacity:.5"></div><div class="a" style="left:1291.0px;top:181px;width:1.0px;height:1.3px;background:#d4d4d4;opacity:.5"></div><div class="a" style="left:1292.0px;top:181px;width:10.0px;height:1.3px;background:#ce9178;opacity:.5"></div><div class="a" style="left:1303.0px;top:181px;width:8.0px;height:1.3px;background:#ce9178;opacity:.5"></div><div class="a" style="left:1312.0px;top:181px;width:8.0px;height:1.3px;background:#ce9178;opacity:.5"></div><div class="a" style="left:1321.0px;top:181px;width:8.0px;height:1.3px;background:#ce9178;opacity:.5"></div><div class="a" style="left:1330.0px;top:181px;width:10.0px;height:1.3px;background:#ce9178;opacity:.5"></div><div class="a" style="left:1340.0px;top:181px;width:1.0px;height:1.3px;background:#808080;opacity:.5"></div><div class="a" style="left:1283.0px;top:183px;width:1.0px;height:1.3px;background:#808080;opacity:.5"></div><div class="a" style="left:1284.0px;top:183px;width:1.0px;height:1.3px;background:#569cd6;opacity:.5"></div><div class="a" style="left:1286.0px;top:183px;width:4.0px;height:1.3px;background:#9cdcfe;opacity:.5"></div><div class="a" style="left:1290.0px;top:183px;width:1.0px;height:1.3px;background:#d4d4d4;opacity:.5"></div><div class="a" style="left:1291.0px;top:183px;width:2.0px;height:1.3px;background:#ce9178;opacity:.5"></div><div class="a" style="left:1294.0px;top:183px;width:5.0px;height:1.3px;background:#9cdcfe;opacity:.5"></div><div class="a" style="left:1299.0px;top:183px;width:1.0px;height:1.3px;background:#d4d4d4;opacity:.5"></div><div class="a" style="left:1300.0px;top:183px;width:8.0px;height:1.3px;background:#ce9178;opacity:.5"></div><div class="a" style="left:1308.0px;top:183px;width:1.0px;height:1.3px;background:#808080;opacity:.5"></div><div class="a" style="left:1309.0px;top:183px;width:1.0px;height:1.3px;background:#808080;opacity:.5"></div><div class="a" style="left:1310.0px;top:183px;width:1.0px;height:1.3px;background:#569cd6;opacity:.5"></div><div class="a" style="left:1312.0px;top:183px;width:5.0px;height:1.3px;background:#9cdcfe;opacity:.5"></div><div class="a" style="left:1317.0px;top:183px;width:1.0px;height:1.3px;background:#d4d4d4;opacity:.5"></div><div class="a" style="left:1318.0px;top:183px;width:10.0px;height:1.3px;background:#ce9178;opacity:.5"></div><div class="a" style="left:1328.0px;top:183px;width:1.0px;height:1.3px;background:#808080;opacity:.5"></div><div class="a" style="left:1329.0px;top:183px;width:2.0px;height:1.3px;background:#808080;opacity:.5"></div><div class="a" style="left:1331.0px;top:183px;width:1.0px;height:1.3px;background:#569cd6;opacity:.5"></div><div class="a" style="left:1332.0px;top:183px;width:1.0px;height:1.3px;background:#808080;opacity:.5"></div><div class="a" style="left:1333.0px;top:183px;width:4.0px;height:1.3px;background:#d4d4d4;opacity:.5"></div><div class="a" style="left:1337.0px;top:183px;width:2.0px;height:1.3px;background:#808080;opacity:.5"></div><div class="a" style="left:1339.0px;top:183px;width:1.0px;height:1.3px;background:#569cd6;opacity:.5"></div><div class="a" style="left:1340.0px;top:183px;width:1.0px;height:1.3px;background:#808080;opacity:.5"></div><div class="a" style="left:1283.0px;top:185px;width:1.0px;height:1.3px;background:#808080;opacity:.5"></div><div class="a" style="left:1284.0px;top:185px;width:1.0px;height:1.3px;background:#569cd6;opacity:.5"></div><div class="a" style="left:1286.0px;top:185px;width:4.0px;height:1.3px;background:#9cdcfe;opacity:.5"></div><div class="a" style="left:1290.0px;top:185px;width:1.0px;height:1.3px;background:#d4d4d4;opacity:.5"></div><div class="a" style="left:1291.0px;top:185px;width:2.0px;height:1.3px;background:#ce9178;opacity:.5"></div><div class="a" style="left:1293.0px;top:185px;width:1.0px;height:1.3px;background:#808080;opacity:.5"></div><div class="a" style="left:1294.0px;top:185px;width:4.0px;height:1.3px;background:#d4d4d4;opacity:.5"></div><div class="a" style="left:1299.0px;top:185px;width:4.0px;height:1.3px;background:#d4d4d4;opacity:.5"></div><div class="a" style="left:1304.0px;top:185px;width:1.0px;height:1.3px;background:#d4d4d4;opacity:.5"></div><div class="a" style="left:1306.0px;top:185px;width:6.0px;height:1.3px;background:#d4d4d4;opacity:.5"></div><div class="a" style="left:1312.0px;top:185px;width:2.0px;height:1.3px;background:#808080;opacity:.5"></div><div class="a" style="left:1314.0px;top:185px;width:1.0px;height:1.3px;background:#569cd6;opacity:.5"></div><div class="a" style="left:1315.0px;top:185px;width:1.0px;height:1.3px;background:#808080;opacity:.5"></div><div class="a" style="left:1283.0px;top:187px;width:1.0px;height:1.3px;background:#808080;opacity:.5"></div><div class="a" style="left:1284.0px;top:187px;width:1.0px;height:1.3px;background:#569cd6;opacity:.5"></div><div class="a" style="left:1286.0px;top:187px;width:4.0px;height:1.3px;background:#9cdcfe;opacity:.5"></div><div class="a" style="left:1290.0px;top:187px;width:1.0px;height:1.3px;background:#d4d4d4;opacity:.5"></div><div class="a" style="left:1291.0px;top:187px;width:2.0px;height:1.3px;background:#ce9178;opacity:.5"></div><div class="a" style="left:1293.0px;top:187px;width:1.0px;height:1.3px;background:#808080;opacity:.5"></div><div class="a" style="left:1294.0px;top:187px;width:4.0px;height:1.3px;background:#d4d4d4;opacity:.5"></div><div class="a" style="left:1299.0px;top:187px;width:3.0px;height:1.3px;background:#d4d4d4;opacity:.5"></div><div class="a" style="left:1303.0px;top:187px;width:6.0px;height:1.3px;background:#d4d4d4;opacity:.5"></div><div class="a" style="left:1309.0px;top:187px;width:2.0px;height:1.3px;background:#808080;opacity:.5"></div><div class="a" style="left:1311.0px;top:187px;width:1.0px;height:1.3px;background:#569cd6;opacity:.5"></div><div class="a" style="left:1312.0px;top:187px;width:1.0px;height:1.3px;background:#808080;opacity:.5"></div><div class="a" style="left:1283.0px;top:189px;width:1.0px;height:1.3px;background:#808080;opacity:.5"></div><div class="a" style="left:1284.0px;top:189px;width:1.0px;height:1.3px;background:#569cd6;opacity:.5"></div><div class="a" style="left:1286.0px;top:189px;width:4.0px;height:1.3px;background:#9cdcfe;opacity:.5"></div><div class="a" style="left:1290.0px;top:189px;width:1.0px;height:1.3px;background:#d4d4d4;opacity:.5"></div><div class="a" style="left:1291.0px;top:189px;width:2.0px;height:1.3px;background:#ce9178;opacity:.5"></div><div class="a" style="left:1293.0px;top:189px;width:1.0px;height:1.3px;background:#808080;opacity:.5"></div><div class="a" style="left:1294.0px;top:189px;width:6.0px;height:1.3px;background:#d4d4d4;opacity:.5"></div><div class="a" style="left:1301.0px;top:189px;width:2.0px;height:1.3px;background:#d4d4d4;opacity:.5"></div><div class="a" style="left:1303.0px;top:189px;width:2.0px;height:1.3px;background:#808080;opacity:.5"></div><div class="a" style="left:1305.0px;top:189px;width:1.0px;height:1.3px;background:#569cd6;opacity:.5"></div><div class="a" style="left:1306.0px;top:189px;width:1.0px;height:1.3px;background:#808080;opacity:.5"></div><div class="a" style="left:1283.0px;top:191px;width:1.0px;height:1.3px;background:#808080;opacity:.5"></div><div class="a" style="left:1284.0px;top:191px;width:1.0px;height:1.3px;background:#569cd6;opacity:.5"></div><div class="a" style="left:1286.0px;top:191px;width:4.0px;height:1.3px;background:#9cdcfe;opacity:.5"></div><div class="a" style="left:1290.0px;top:191px;width:1.0px;height:1.3px;background:#d4d4d4;opacity:.5"></div><div class="a" style="left:1291.0px;top:191px;width:2.0px;height:1.3px;background:#ce9178;opacity:.5"></div><div class="a" style="left:1293.0px;top:191px;width:1.0px;height:1.3px;background:#808080;opacity:.5"></div><div class="a" style="left:1294.0px;top:191px;width:3.0px;height:1.3px;background:#d4d4d4;opacity:.5"></div><div class="a" style="left:1298.0px;top:191px;width:2.0px;height:1.3px;background:#d4d4d4;opacity:.5"></div><div class="a" style="left:1300.0px;top:191px;width:2.0px;height:1.3px;background:#808080;opacity:.5"></div><div class="a" style="left:1302.0px;top:191px;width:1.0px;height:1.3px;background:#569cd6;opacity:.5"></div><div class="a" style="left:1303.0px;top:191px;width:1.0px;height:1.3px;background:#808080;opacity:.5"></div><div class="a" style="left:1283.0px;top:193px;width:1.0px;height:1.3px;background:#808080;opacity:.5"></div><div class="a" style="left:1284.0px;top:193px;width:1.0px;height:1.3px;background:#569cd6;opacity:.5"></div><div class="a" style="left:1286.0px;top:193px;width:4.0px;height:1.3px;background:#9cdcfe;opacity:.5"></div><div class="a" style="left:1290.0px;top:193px;width:1.0px;height:1.3px;background:#d4d4d4;opacity:.5"></div><div class="a" style="left:1291.0px;top:193px;width:20.0px;height:1.3px;background:#ce9178;opacity:.5"></div><div class="a" style="left:1312.0px;top:193px;width:5.0px;height:1.3px;background:#9cdcfe;opacity:.5"></div><div class="a" style="left:1317.0px;top:193px;width:1.0px;height:1.3px;background:#d4d4d4;opacity:.5"></div><div class="a" style="left:1318.0px;top:193px;width:6.0px;height:1.3px;background:#ce9178;opacity:.5"></div><div class="a" style="left:1325.0px;top:193px;width:7.0px;height:1.3px;background:#9cdcfe;opacity:.5"></div><div class="a" style="left:1332.0px;top:193px;width:1.0px;height:1.3px;background:#d4d4d4;opacity:.5"></div><div class="a" style="left:1333.0px;top:193px;width:11.0px;height:1.3px;background:#ce9178;opacity:.5"></div><div class="a" style="left:1344.0px;top:193px;width:1.0px;height:1.3px;background:#808080;opacity:.5"></div><div class="a" style="left:1345.0px;top:193px;width:1.0px;height:1.3px;background:#808080;opacity:.5"></div><div class="a" style="left:1346.0px;top:193px;width:1.0px;height:1.3px;background:#569cd6;opacity:.5"></div><div class="a" style="left:1348.0px;top:193px;width:5.0px;height:1.3px;background:#9cdcfe;opacity:.5"></div><div class="a" style="left:1353.0px;top:193px;width:1.0px;height:1.3px;background:#d4d4d4;opacity:.5"></div><div class="a" style="left:1354.0px;top:193px;width:9.0px;height:1.3px;background:#ce9178;opacity:.5"></div><div class="a" style="left:1281.0px;top:195px;width:2.0px;height:1.3px;background:#808080;opacity:.5"></div><div class="a" style="left:1283.0px;top:195px;width:3.0px;height:1.3px;background:#569cd6;opacity:.5"></div><div class="a" style="left:1286.0px;top:195px;width:1.0px;height:1.3px;background:#808080;opacity:.5"></div><div class="a" style="left:1279.0px;top:197px;width:2.0px;height:1.3px;background:#808080;opacity:.5"></div><div class="a" style="left:1281.0px;top:197px;width:3.0px;height:1.3px;background:#569cd6;opacity:.5"></div><div class="a" style="left:1284.0px;top:197px;width:1.0px;height:1.3px;background:#808080;opacity:.5"></div><div class="a" style="left:1277.0px;top:199px;width:2.0px;height:1.3px;background:#808080;opacity:.5"></div><div class="a" style="left:1279.0px;top:199px;width:3.0px;height:1.3px;background:#569cd6;opacity:.5"></div><div class="a" style="left:1282.0px;top:199px;width:1.0px;height:1.3px;background:#808080;opacity:.5"></div><div class="a" style="left:1275.0px;top:201px;width:2.0px;height:1.3px;background:#808080;opacity:.5"></div><div class="a" style="left:1277.0px;top:201px;width:3.0px;height:1.3px;background:#569cd6;opacity:.5"></div><div class="a" style="left:1280.0px;top:201px;width:1.0px;height:1.3px;background:#808080;opacity:.5"></div><div class="a" style="left:1275.0px;top:203px;width:4.0px;height:1.3px;background:#6a9955;opacity:.5"></div><div class="a" style="left:1280.0px;top:203px;width:3.0px;height:1.3px;background:#6a9955;opacity:.5"></div><div class="a" style="left:1284.0px;top:203px;width:6.0px;height:1.3px;background:#6a9955;opacity:.5"></div><div class="a" style="left:1291.0px;top:203px;width:7.0px;height:1.3px;background:#6a9955;opacity:.5"></div><div class="a" style="left:1299.0px;top:203px;width:3.0px;height:1.3px;background:#6a9955;opacity:.5"></div><div class="a" style="left:1274.0px;top:205px;width:4.0px;height:1.3px;background:#6a9955;opacity:.5"></div><div class="a" style="left:1279.0px;top:205px;width:5.0px;height:1.3px;background:#6a9955;opacity:.5"></div><div class="a" style="left:1285.0px;top:205px;width:6.0px;height:1.3px;background:#6a9955;opacity:.5"></div><div class="a" style="left:1292.0px;top:205px;width:7.0px;height:1.3px;background:#6a9955;opacity:.5"></div><div class="a" style="left:1300.0px;top:205px;width:3.0px;height:1.3px;background:#6a9955;opacity:.5"></div><div class="a" style="left:1273.0px;top:207px;width:1.0px;height:1.3px;background:#808080;opacity:.5"></div><div class="a" style="left:1274.0px;top:207px;width:6.0px;height:1.3px;background:#569cd6;opacity:.5"></div><div class="a" style="left:1281.0px;top:207px;width:5.0px;height:1.3px;background:#9cdcfe;opacity:.5"></div><div class="a" style="left:1286.0px;top:207px;width:1.0px;height:1.3px;background:#d4d4d4;opacity:.5"></div><div class="a" style="left:1287.0px;top:207px;width:17.0px;height:1.3px;background:#ce9178;opacity:.5"></div><div class="a" style="left:1304.0px;top:207px;width:1.0px;height:1.3px;background:#808080;opacity:.5"></div><div class="a" style="left:1275.0px;top:209px;width:1.0px;height:1.3px;background:#808080;opacity:.5"></div><div class="a" style="left:1276.0px;top:209px;width:3.0px;height:1.3px;background:#569cd6;opacity:.5"></div><div class="a" style="left:1280.0px;top:209px;width:5.0px;height:1.3px;background:#9cdcfe;opacity:.5"></div><div class="a" style="left:1285.0px;top:209px;width:1.0px;height:1.3px;background:#d4d4d4;opacity:.5"></div><div class="a" style="left:1286.0px;top:209px;width:5.0px;height:1.3px;background:#ce9178;opacity:.5"></div><div class="a" style="left:1291.0px;top:209px;width:1.0px;height:1.3px;background:#808080;opacity:.5"></div><div class="a" style="left:1277.0px;top:211px;width:1.0px;height:1.3px;background:#808080;opacity:.5"></div><div class="a" style="left:1278.0px;top:211px;width:3.0px;height:1.3px;background:#569cd6;opacity:.5"></div><div class="a" style="left:1282.0px;top:211px;width:5.0px;height:1.3px;background:#9cdcfe;opacity:.5"></div><div class="a" style="left:1287.0px;top:211px;width:1.0px;height:1.3px;background:#d4d4d4;opacity:.5"></div><div class="a" style="left:1288.0px;top:211px;width:10.0px;height:1.3px;background:#ce9178;opacity:.5"></div><div class="a" style="left:1299.0px;top:211px;width:17.0px;height:1.3px;background:#ce9178;opacity:.5"></div><div class="a" style="left:1317.0px;top:211px;width:8.0px;height:1.3px;background:#ce9178;opacity:.5"></div><div class="a" style="left:1326.0px;top:211px;width:10.0px;height:1.3px;background:#ce9178;opacity:.5"></div><div class="a" style="left:1336.0px;top:211px;width:1.0px;height:1.3px;background:#808080;opacity:.5"></div><div class="a" style="left:1279.0px;top:213px;width:1.0px;height:1.3px;background:#808080;opacity:.5"></div><div class="a" style="left:1280.0px;top:213px;width:6.0px;height:1.3px;background:#569cd6;opacity:.5"></div><div class="a" style="left:1286.0px;top:213px;width:1.0px;height:1.3px;background:#808080;opacity:.5"></div><div class="a" style="left:1281.0px;top:215px;width:1.0px;height:1.3px;background:#808080;opacity:.5"></div><div class="a" style="left:1282.0px;top:215px;width:3.0px;height:1.3px;background:#569cd6;opacity:.5"></div><div class="a" style="left:1286.0px;top:215px;width:3.0px;height:1.3px;background:#9cdcfe;opacity:.5"></div><div class="a" style="left:1289.0px;top:215px;width:1.0px;height:1.3px;background:#d4d4d4;opacity:.5"></div><div class="a" style="left:1290.0px;top:215px;width:18.0px;height:1.3px;background:#ce9178;opacity:.5"></div><div class="a" style="left:1309.0px;top:215px;width:3.0px;height:1.3px;background:#9cdcfe;opacity:.5"></div><div class="a" style="left:1312.0px;top:215px;width:1.0px;height:1.3px;background:#d4d4d4;opacity:.5"></div><div class="a" style="left:1313.0px;top:215px;width:2.0px;height:1.3px;background:#ce9178;opacity:.5"></div><div class="a" style="left:1315.0px;top:215px;width:1.0px;height:1.3px;background:#808080;opacity:.5"></div><div class="a" style="left:1279.0px;top:217px;width:2.0px;height:1.3px;background:#808080;opacity:.5"></div><div class="a" style="left:1281.0px;top:217px;width:6.0px;height:1.3px;background:#569cd6;opacity:.5"></div><div class="a" style="left:1287.0px;top:217px;width:1.0px;height:1.3px;background:#808080;opacity:.5"></div><div class="a" style="left:1277.0px;top:219px;width:2.0px;height:1.3px;background:#808080;opacity:.5"></div><div class="a" style="left:1279.0px;top:219px;width:3.0px;height:1.3px;background:#569cd6;opacity:.5"></div><div class="a" style="left:1282.0px;top:219px;width:1.0px;height:1.3px;background:#808080;opacity:.5"></div><div class="a" style="left:1275.0px;top:221px;width:2.0px;height:1.3px;background:#808080;opacity:.5"></div><div class="a" style="left:1277.0px;top:221px;width:3.0px;height:1.3px;background:#569cd6;opacity:.5"></div><div class="a" style="left:1280.0px;top:221px;width:1.0px;height:1.3px;background:#808080;opacity:.5"></div><div class="a" style="left:1273.0px;top:223px;width:2.0px;height:1.3px;background:#808080;opacity:.5"></div><div class="a" style="left:1275.0px;top:223px;width:6.0px;height:1.3px;background:#569cd6;opacity:.5"></div><div class="a" style="left:1281.0px;top:223px;width:1.0px;height:1.3px;background:#808080;opacity:.5"></div><div class="a" style="left:1275.0px;top:225px;width:4.0px;height:1.3px;background:#6a9955;opacity:.5"></div><div class="a" style="left:1280.0px;top:225px;width:3.0px;height:1.3px;background:#6a9955;opacity:.5"></div><div class="a" style="left:1284.0px;top:225px;width:6.0px;height:1.3px;background:#6a9955;opacity:.5"></div><div class="a" style="left:1291.0px;top:225px;width:7.0px;height:1.3px;background:#6a9955;opacity:.5"></div><div class="a" style="left:1299.0px;top:225px;width:3.0px;height:1.3px;background:#6a9955;opacity:.5"></div><div class="a" style="left:1275.0px;top:227px;width:1.0px;height:1.3px;background:#808080;opacity:.5"></div><div class="a" style="left:1276.0px;top:227px;width:6.0px;height:1.3px;background:#569cd6;opacity:.5"></div><div class="a" style="left:1283.0px;top:227px;width:3.0px;height:1.3px;background:#9cdcfe;opacity:.5"></div><div class="a" style="left:1286.0px;top:227px;width:1.0px;height:1.3px;background:#d4d4d4;opacity:.5"></div><div class="a" style="left:1287.0px;top:227px;width:19.0px;height:1.3px;background:#ce9178;opacity:.5"></div><div class="a" style="left:1306.0px;top:227px;width:1.0px;height:1.3px;background:#808080;opacity:.5"></div><div class="a" style="left:1307.0px;top:227px;width:2.0px;height:1.3px;background:#808080;opacity:.5"></div><div class="a" style="left:1309.0px;top:227px;width:6.0px;height:1.3px;background:#569cd6;opacity:.5"></div><div class="a" style="left:1315.0px;top:227px;width:1.0px;height:1.3px;background:#808080;opacity:.5"></div><div class="a" style="left:1273.0px;top:229px;width:2.0px;height:1.3px;background:#808080;opacity:.5"></div><div class="a" style="left:1275.0px;top:229px;width:4.0px;height:1.3px;background:#569cd6;opacity:.5"></div><div class="a" style="left:1279.0px;top:229px;width:1.0px;height:1.3px;background:#808080;opacity:.5"></div><div class="a" style="left:1273.0px;top:233px;width:2.0px;height:1.3px;background:#808080;opacity:.5"></div><div class="a" style="left:1275.0px;top:233px;width:4.0px;height:1.3px;background:#569cd6;opacity:.5"></div><div class="a" style="left:1279.0px;top:233px;width:1.0px;height:1.3px;background:#808080;opacity:.5"></div><div class="a" style="left:1364.00px;top:115.00px;width:1.00px;height:878.00px;background:#2b2b2b;"></div><div class="a" style="left:1364.50px;top:404.00px;width:17.00px;height:338.00px;background:#424242;"></div><div class="a" style="left:1365.00px;top:654.00px;width:16.00px;height:2.00px;background:#8a8a8a;"></div><div class="a" style="left:360.00px;top:978.00px;width:716.00px;height:15.00px;background:#424242;"></div><div class="a" style="left:1381.00px;top:44.00px;width:2.00px;height:949.00px;background:#444444;"></div><div class="a" style="left:1383.00px;top:44.00px;width:537.00px;height:44.00px;background:#252526;"></div><div class="a" style="left:1383.00px;top:44.00px;width:147.00px;height:44.00px;background:#1e1e1e;"></div><div class="a" style="left:1530.00px;top:44.00px;width:1.00px;height:44.00px;background:#252526;"></div><svg style="left:1400.0px;top:60.5px" width="11" height="11" viewBox="0 0 12 12"><path d="M4 0.5L3 11.5M8.5 0.5L7.5 11.5M0.5 4h11M0 8h11" stroke="#519aba" stroke-width="2" fill="none"/></svg><div class="t" style="left:1421.0px;top:58.43px;font-size:15.80px;color:#969696;font-weight:normal;transform:scaleX(0.9566);transform-origin:0 0;">style.css</div><svg style="left:1506.0px;top:59.5px" width="13" height="13" viewBox="0 0 13 13"><path d="M0.8 0.8l11.4 11.4M12.2 0.8L0.8 12.2" stroke="#a0a0a0" stroke-width="1.4"/></svg><div class="a" style="left:1530.00px;top:44.00px;width:150.00px;height:44.00px;background:#2d2d2d;"></div><div class="a" style="left:1680.00px;top:44.00px;width:1.00px;height:44.00px;background:#252526;"></div><svg style="left:1550.0px;top:60.5px" width="11" height="11" viewBox="0 0 12 12"><path d="M4 0.5L3 11.5M8.5 0.5L7.5 11.5M0.5 4h11M0 8h11" stroke="#519aba" stroke-width="2" fill="none"/></svg><div class="t" style="left:1571.0px;top:58.43px;font-size:15.80px;color:#8b8b8b;font-weight:normal;transform:scaleX(1.0010);transform-origin:0 0;">-menu.css</div><div class="a" style="left:1680.00px;top:44.00px;width:150.00px;height:44.00px;background:#2d2d2d;"></div><div class="a" style="left:1830.00px;top:44.00px;width:1.00px;height:44.00px;background:#252526;"></div><div class="t" style="left:1700.0px;top:61.27px;font-size:11.50px;color:#cbcb41;font-weight:bold;letter-spacing:-0.5px">JS</div><div class="t" style="left:1721.0px;top:58.43px;font-size:15.80px;color:#8b8b8b;font-weight:normal;transform:scaleX(0.9980);transform-origin:0 0;">main.js</div><div class="a" style="left:1830.00px;top:44.00px;width:43.00px;height:44.00px;background:#2d2d2d;"></div><svg style="left:1850.0px;top:60.5px" width="11" height="11" viewBox="0 0 12 12"><path d="M4 0.5L3 11.5M8.5 0.5L7.5 11.5M0.5 4h11M0 8h11" stroke="#519aba" stroke-width="2" fill="none"/></svg><div class="a" style="left:1884.00px;top:65.00px;width:2.60px;height:2.60px;background:#cccccc;border-radius:50%"></div><div class="a" style="left:1889.50px;top:65.00px;width:2.60px;height:2.60px;background:#cccccc;border-radius:50%"></div><div class="a" style="left:1895.00px;top:65.00px;width:2.60px;height:2.60px;background:#cccccc;border-radius:50%"></div><div class="t" style="left:1401.7px;top:94.63px;font-size:15.80px;color:#a9a9a9;font-weight:normal;transform:scaleX(0.9473);transform-origin:0 0;">assets</div><svg style="left:1452.0px;top:95.0px" width="8" height="14" viewBox="0 0 8 14"><path d="M1 1l6 6-6 6" stroke="#a9a9a9" stroke-width="1.3" fill="none"/></svg><div class="t" style="left:1464.5px;top:94.63px;font-size:15.80px;color:#a9a9a9;font-weight:normal;transform:scaleX(0.9049);transform-origin:0 0;">css</div><svg style="left:1492.0px;top:95.0px" width="8" height="14" viewBox="0 0 8 14"><path d="M1 1l6 6-6 6" stroke="#a9a9a9" stroke-width="1.3" fill="none"/></svg><svg style="left:1512.0px;top:96.5px" width="11" height="11" viewBox="0 0 12 12"><path d="M4 0.5L3 11.5M8.5 0.5L7.5 11.5M0.5 4h11M0 8h11" stroke="#519aba" stroke-width="2" fill="none"/></svg><div class="t" style="left:1533.0px;top:94.63px;font-size:15.80px;color:#a9a9a9;font-weight:normal;transform:scaleX(0.9566);transform-origin:0 0;">style.css</div><svg style="left:1597.0px;top:95.0px" width="8" height="14" viewBox="0 0 8 14"><path d="M1 1l6 6-6 6" stroke="#a9a9a9" stroke-width="1.3" fill="none"/></svg><svg style="left:1612px;top:93px" width="18" height="18" viewBox="0 0 18 18" fill="none" stroke="#ee9d28" stroke-width="1.5" stroke-linejoin="round">
<path d="M1.5 4.5l3-3 3 3-3 3z"/><path d="M11 9.5l2.5-2.5 3 3-2.5 2.5z"/><path d="M11.5 13l2.5 2.5 2-2"/><path d="M6.5 5.5l4.5 4"/></svg><div class="t" style="left:1635.0px;top:94.63px;font-size:15.80px;color:#a9a9a9;font-weight:normal;transform:scaleX(1.0314);transform-origin:0 0;">@font-face</div><div class="a" style="left:1469.40px;top:186.25px;width:1.20px;height:95.00px;background:#707070;"></div><div class="a" style="left:1469.4px;top:281.25px;width:387.6px;height:23.75px;border:2px solid #282828;border-right:none"></div><div class="code" style="left:1469.4px;top:115.00px;width:385.6px;overflow:hidden"><span style="color:#c586c0">@import</span><span style="color:#d4d4d4"> </span><span style="color:#ce9178;text-decoration:underline;text-underline-offset:5px;text-decoration-thickness:1px">'–contact.css'</span><span style="color:#d4d4d4">;</span></div><div class="ln" style="left:1376.5px;top:115.00px;width:60px;color:#858585">1</div><div class="code" style="left:1469.4px;top:138.75px;width:385.6px;overflow:hidden"><span style="color:#c586c0">@import</span><span style="color:#d4d4d4"> </span><span style="color:#ce9178;text-decoration:underline;text-underline-offset:5px;text-decoration-thickness:1px">'–menu.css'</span><span style="color:#d4d4d4">;</span></div><div class="ln" style="left:1376.5px;top:138.75px;width:60px;color:#858585">2</div><div class="code" style="left:1469.4px;top:162.50px;width:385.6px;overflow:hidden"><span style="color:#c586c0">@font–face</span><span style="color:#ffd700">{</span></div><div class="ln" style="left:1376.5px;top:162.50px;width:60px;color:#858585">3</div><div class="code" style="left:1469.4px;top:186.25px;width:385.6px;overflow:hidden"><span style="color:#d4d4d4">    </span><span style="color:#9cdcfe">font–family</span><span style="color:#d4d4d4">: </span><span style="color:#ce9178">'vazirmatn'</span><span style="color:#d4d4d4">;</span></div><div class="ln" style="left:1376.5px;top:186.25px;width:60px;color:#858585">4</div><div class="code" style="left:1469.4px;top:210.00px;width:385.6px;overflow:hidden"><span style="color:#d4d4d4">    </span><span style="color:#9cdcfe">src</span><span style="color:#d4d4d4">: </span><span style="color:#dcdcaa">url</span><span style="color:#da70d6">(</span><span style="color:#ce9178;text-decoration:underline;text-underline-offset:5px;text-decoration-thickness:1px">'../font/Vazirmatn–Medium.woff2'</span><span style="color:#da70d6">)</span><span style="color:#d4d4d4">;</span></div><div class="ln" style="left:1376.5px;top:210.00px;width:60px;color:#858585">5</div><div class="code" style="left:1469.4px;top:233.75px;width:385.6px;overflow:hidden"><span style="color:#d4d4d4">    </span><span style="color:#9cdcfe">font–weight</span><span style="color:#d4d4d4">:</span><span style="color:#b5cea8">700</span><span style="color:#d4d4d4">;</span></div><div class="ln" style="left:1376.5px;top:233.75px;width:60px;color:#858585">6</div><div class="code" style="left:1469.4px;top:257.50px;width:385.6px;overflow:hidden"><span style="color:#d4d4d4">    </span><span style="color:#9cdcfe">font–style</span><span style="color:#d4d4d4">: </span><span style="color:#ce9178">normal</span><span style="color:#d4d4d4">;</span></div><div class="ln" style="left:1376.5px;top:257.50px;width:60px;color:#858585">7</div><div class="code" style="left:1469.4px;top:281.25px;width:385.6px;overflow:hidden"><span style="color:#ffd700">}</span></div><div class="ln" style="left:1376.5px;top:281.25px;width:60px;color:#c6c6c6">8</div><div class="code" style="left:1469.4px;top:305.00px;width:385.6px;overflow:hidden"></div><div class="ln" style="left:1376.5px;top:305.00px;width:60px;color:#858585">9</div><div class="a" style="left:1855.00px;top:115.00px;width:48.00px;height:878.00px;background:#1e1e1e;"></div><div class="a" style="left:1848px;top:115.0px;width:7px;height:878.0px;background:linear-gradient(90deg,#00000000,#000000b0)"></div><div class="a" style="left:1863.0px;top:115px;width:7.0px;height:1.3px;background:#c586c0;opacity:.5"></div><div class="a" style="left:1871.0px;top:115px;width:14.0px;height:1.3px;background:#ce9178;opacity:.5"></div><div class="a" style="left:1885.0px;top:115px;width:1.0px;height:1.3px;background:#d4d4d4;opacity:.5"></div><div class="a" style="left:1863.0px;top:117px;width:7.0px;height:1.3px;background:#c586c0;opacity:.5"></div><div class="a" style="left:1871.0px;top:117px;width:11.0px;height:1.3px;background:#ce9178;opacity:.5"></div><div class="a" style="left:1882.0px;top:117px;width:1.0px;height:1.3px;background:#d4d4d4;opacity:.5"></div><div class="a" style="left:1863.0px;top:119px;width:10.0px;height:1.3px;background:#c586c0;opacity:.5"></div><div class="a" style="left:1873.0px;top:119px;width:1.0px;height:1.3px;background:#ffd700;opacity:.5"></div><div class="a" style="left:1867.0px;top:121px;width:11.0px;height:1.3px;background:#9cdcfe;opacity:.5"></div><div class="a" style="left:1878.0px;top:121px;width:1.0px;height:1.3px;background:#d4d4d4;opacity:.5"></div><div class="a" style="left:1880.0px;top:121px;width:11.0px;height:1.3px;background:#ce9178;opacity:.5"></div><div class="a" style="left:1891.0px;top:121px;width:1.0px;height:1.3px;background:#d4d4d4;opacity:.5"></div><div class="a" style="left:1867.0px;top:123px;width:3.0px;height:1.3px;background:#9cdcfe;opacity:.5"></div><div class="a" style="left:1870.0px;top:123px;width:1.0px;height:1.3px;background:#d4d4d4;opacity:.5"></div><div class="a" style="left:1872.0px;top:123px;width:3.0px;height:1.3px;background:#dcdcaa;opacity:.5"></div><div class="a" style="left:1875.0px;top:123px;width:1.0px;height:1.3px;background:#da70d6;opacity:.5"></div><div class="a" style="left:1876.0px;top:123px;width:27.0px;height:1.3px;background:#ce9178;opacity:.5"></div><div class="a" style="left:1867.0px;top:125px;width:11.0px;height:1.3px;background:#9cdcfe;opacity:.5"></div><div class="a" style="left:1878.0px;top:125px;width:1.0px;height:1.3px;background:#d4d4d4;opacity:.5"></div><div class="a" style="left:1879.0px;top:125px;width:3.0px;height:1.3px;background:#b5cea8;opacity:.5"></div><div class="a" style="left:1882.0px;top:125px;width:1.0px;height:1.3px;background:#d4d4d4;opacity:.5"></div><div class="a" style="left:1867.0px;top:127px;width:10.0px;height:1.3px;background:#9cdcfe;opacity:.5"></div><div class="a" style="left:1877.0px;top:127px;width:1.0px;height:1.3px;background:#d4d4d4;opacity:.5"></div><div class="a" style="left:1879.0px;top:127px;width:6.0px;height:1.3px;background:#ce9178;opacity:.5"></div><div class="a" style="left:1885.0px;top:127px;width:1.0px;height:1.3px;background:#d4d4d4;opacity:.5"></div><div class="a" style="left:1863.0px;top:129px;width:1.0px;height:1.3px;background:#ffd700;opacity:.5"></div><div class="a" style="left:1903.00px;top:115.00px;width:1.00px;height:878.00px;background:#2b2b2b;"></div><div class="a" style="left:1904.00px;top:250.00px;width:16.00px;height:2.00px;background:#8a8a8a;"></div><div class="a" style="left:1901.50px;top:220.00px;width:1.50px;height:2.50px;background:#ce9178;"></div><div class="a" style="left:1901.50px;top:230.50px;width:1.50px;height:2.00px;background:#ce9178;"></div><div class="a" style="left:1362.50px;top:299.00px;width:1.50px;height:8.50px;background:#ce9178;"></div><div class="a" style="left:0.00px;top:993.00px;width:1920.00px;height:27.00px;background:#007acc;"></div><svg style="left:8px;top:994px" width="24" height="24" viewBox="8 994 24 24" fill="none"><path d="M13.6 1003 L20.6 1008 L13.6 1013 M26.7 998.5 L20.8 1002.8 L26.7 1007" stroke="#ffffff" stroke-width="1.5"/></svg><svg style="left:51px;top:997px" width="19" height="19" viewBox="0 0 19 19" fill="none" stroke="#ffffff" stroke-width="1.4"><circle cx="9.5" cy="9.5" r="8.3"/><path d="M6.3 6.3l6.4 6.4M12.7 6.3l-6.4 6.4"/></svg><div class="t" style="left:74.0px;top:999.29px;font-size:15.60px;color:#ffffff;font-weight:normal;">0</div><svg style="left:88px;top:997px" width="18" height="18" viewBox="0 0 18 18" fill="none" stroke="#ffffff" stroke-width="1.4" stroke-linejoin="round"><path d="M9 1.5L17 16.5H1z"/><path d="M9 6.5v5M9 13v1.5"/></svg><div class="t" style="left:111.0px;top:999.29px;font-size:15.60px;color:#ffffff;font-weight:normal;">0</div><div class="t" style="left:1265.0px;top:999.12px;font-size:15.10px;color:#ffffff;font-weight:normal;transform:scaleX(0.9509);transform-origin:0 0;">Ln 60, Col 8</div><div class="t" style="left:1362.5px;top:999.12px;font-size:15.10px;color:#ffffff;font-weight:normal;transform:scaleX(0.9071);transform-origin:0 0;">Spaces: 2</div><div class="t" style="left:1444.0px;top:999.12px;font-size:15.10px;color:#ffffff;font-weight:normal;transform:scaleX(0.9565);transform-origin:0 0;">UTF-8</div><div class="t" style="left:1503.0px;top:999.12px;font-size:15.10px;color:#ffffff;font-weight:normal;transform:scaleX(0.8601);transform-origin:0 0;">CRLF</div><div class="t" style="left:1584.0px;top:999.12px;font-size:15.10px;color:#ffffff;font-weight:normal;transform:scaleX(0.9711);transform-origin:0 0;">HTML</div><div class="t" style="left:1706.0px;top:999.12px;font-size:15.10px;color:#ffffff;font-weight:normal;transform:scaleX(0.9738);transform-origin:0 0;">Port : 5500</div><div class="t" style="left:1822.0px;top:999.12px;font-size:15.10px;color:#ffffff;font-weight:normal;transform:scaleX(1.0051);transform-origin:0 0;">Prettier</div><div class="t" style="left:1558.0px;top:998.63px;font-size:15.20px;color:#ffffff;font-weight:normal;">{ }</div><svg style="left:1638px;top:994px" width="30" height="26" viewBox="1638 994 30 26" fill="none"><circle cx="1649.4" cy="1001.8" r="3.4" stroke="#ffffff" stroke-width="2"/><circle cx="1656.4" cy="1001.8" r="3.4" stroke="#ffffff" stroke-width="2"/><path d="M1644.5 1005 H1661 C1663 1006 1664 1008 1663.8 1010 C1663 1013.5 1658 1015.3 1652.9 1015.3 C1647.8 1015.3 1642.8 1013.5 1642 1010 C1641.8 1008 1642.8 1006 1644.5 1005 Z M1649.3 1007.5 V1011 H1651 V1007.5 Z M1654.8 1007.5 V1011 H1656.5 V1007.5 Z" fill="#ffffff" fill-rule="evenodd"/></svg><svg style="left:1683px;top:997px" width="18" height="18" viewBox="0 0 18 18" fill="none" stroke="#ffffff" stroke-width="1.5"><circle cx="9" cy="9" r="7.8"/><path d="M3.5 14.5l11-11"/></svg><svg style="left:1798px;top:1000px" width="18" height="13" viewBox="0 0 18 13" fill="none" stroke="#ffffff" stroke-width="1.5"><path d="M1 7l4 4.5L14 1.5M7.5 11.5L17 2"/></svg><svg style="left:1892px;top:997px" width="16" height="18" viewBox="0 0 16 18" fill="none" stroke="#ffffff" stroke-width="1.4" stroke-linejoin="round"><path d="M8 1.5c-3 0-5 2.2-5 5v4.5l-2 2.5h14l-2-2.5V6.5c0-2.8-2-5-5-5z"/><path d="M6 15.5c.3 1 1 1.5 2 1.5s1.7-.5 2-1.5"/></svg><div class="a" style="left:0.00px;top:1020.00px;width:1920.00px;height:60.00px;background:#1c1c1c;"></div><div class="a" style="left:0.00px;top:1020.00px;width:1920.00px;height:1.00px;background:#2a2a2a;"></div><svg style="left:20px;top:1025px" width="45" height="45" viewBox="20 1025 45 45" fill="none"><defs><linearGradient id="mg" x1="0" y1="0" x2="0" y2="1"><stop offset="0" stop-color="#ffb52e"/><stop offset="1" stop-color="#ef7d0f"/></linearGradient><linearGradient id="cg" x1="0" y1="0" x2="0" y2="1"><stop offset="0" stop-color="#e6f0fb"/><stop offset="1" stop-color="#9fbfee"/></linearGradient></defs><path d="M28 1045 C27 1055 35 1062 43 1061.5 C49 1061 52 1057 52.5 1053 C47 1057 37 1055 34 1046 Z" fill="url(#mg)"/><path d="M26 1044.5 C24.5 1044.5 24.5 1040.5 27.5 1040.5 C28 1037.5 31.5 1036 34 1038 C36 1035.5 41 1036.5 41 1040.5 C43.5 1040.5 43.5 1044.5 41.5 1044.5 Z" fill="url(#cg)"/><path d="M39 1059.8 C37 1059.8 37 1055.5 40 1055.5 C40.5 1052 44.5 1050.5 47 1052.5 C49.5 1050 54 1051.5 54 1055.5 C56 1055.5 56 1059.8 54 1059.8 Z" fill="url(#cg)"/></svg><div class="a" style="left:39.00px;top:1028.50px;width:19.00px;height:19.00px;background:#f1899a;border-radius:50%"></div><div class="t" style="left:44.5px;top:1032.00px;font-size:13.00px;color:#111111;font-weight:normal;">2</div><div class="t" style="left:64.0px;top:1032.05px;font-size:15.30px;color:#ffffff;font-weight:normal;transform:scaleX(0.9518);transform-origin:0 0;">79°F</div><div class="t" style="left:63.0px;top:1052.25px;font-size:15.30px;color:#d0d0d0;font-weight:normal;transform:scaleX(0.9925);transform-origin:0 0;">Partly cloudy</div><div class="a" style="left:585.00px;top:1036.00px;width:14.00px;height:14.00px;background:linear-gradient(135deg,#6fd3fb,#1aa0f0);border-radius:1px"></div><div class="a" style="left:600.00px;top:1036.00px;width:14.00px;height:14.00px;background:linear-gradient(135deg,#6fd3fb,#1aa0f0);border-radius:1px"></div><div class="a" style="left:585.00px;top:1051.00px;width:14.00px;height:14.00px;background:linear-gradient(135deg,#6fd3fb,#1aa0f0);border-radius:1px"></div><div class="a" style="left:600.00px;top:1051.00px;width:14.00px;height:14.00px;background:linear-gradient(135deg,#6fd3fb,#1aa0f0);border-radius:1px"></div><div class="a" style="left:631px;top:1030px;width:275px;height:40px;background:#3a3a3a;border:1px solid #474747;border-radius:20px"></div><svg style="left:646px;top:1041px" width="19" height="19" viewBox="0 0 19 19" fill="none" stroke="#d8d8d8" stroke-width="1.8"><circle cx="8" cy="8" r="6.3"/><path d="M12.5 12.5l5 5"/></svg><div class="t" style="left:677.0px;top:1043.63px;font-size:15.80px;color:#dddddd;font-weight:normal;transform:scaleX(1.0377);transform-origin:0 0;">Search</div><svg style="left:844px;top:1036px" width="52" height="28" viewBox="0 0 52 28">
<path d="M2 26C6 16 12 6 23 1 16 10 11 18 4 26z" fill="#c58b5a"/><rect x="10" y="16" width="9" height="10" rx="3" fill="#4e5bb5"/>
<rect x="26" y="4" width="4" height="23" fill="#c98a1f"/><rect x="30" y="1" width="4" height="26" fill="#c0392b"/><rect x="34" y="4" width="4" height="23" fill="#2e8b57"/><rect x="38" y="6" width="4" height="21" fill="#d4a017"/><rect x="42" y="8" width="4" height="19" fill="#1e8c93"/></svg><div class="a" style="left:929.00px;top:1036.00px;width:22.00px;height:20.00px;background:#e8e8e8;border-radius:2px"></div><div class="a" style="left:921.00px;top:1044.00px;width:22.00px;height:20.00px;background:rgba(120,120,120,0.85);border-radius:2px"></div><svg style="left:975px;top:1035px" width="31" height="31" viewBox="0 0 30 30">
<circle cx="15" cy="15" r="14.5" fill="#db4437"/>
<path d="M15 15 L27.56 7.75 A14.5 14.5 0 0 1 15 29.5 Z" fill="#f4c20d"/>
<path d="M15 15 L15 29.5 A14.5 14.5 0 0 1 2.44 7.75 Z" fill="#0f9d58"/>
<path d="M15 15 L2.44 7.75 A14.5 14.5 0 0 1 27.56 7.75 Z" fill="#db4437"/>
<circle cx="15" cy="15" r="6.8" fill="#ffffff"/><circle cx="15" cy="15" r="5.3" fill="#4285f4"/></svg><div class="a" style="left:986.00px;top:1070.00px;width:9.00px;height:3.00px;background:#9a9a9a;border-radius:2px"></div><svg style="left:1028px;top:1032px" width="36" height="36" viewBox="1028 1032 36 36" fill="none"><defs><linearGradient id="eg1" x1="0" y1="0" x2="1" y2="0.6"><stop offset="0" stop-color="#2fb3f0"/><stop offset="0.5" stop-color="#32c9c3"/><stop offset="1" stop-color="#6fe85a"/></linearGradient><linearGradient id="eg2" x1="0" y1="0" x2="0.3" y2="1"><stop offset="0" stop-color="#1c8ee8"/><stop offset="1" stop-color="#0a74d6"/></linearGradient></defs><circle cx="1045.9" cy="1049.9" r="15.1" fill="url(#eg1)"/><path d="M1031.2 1046.5 C1034 1040 1043 1039 1047 1043.5 C1043 1045 1039.5 1049 1040.5 1054.5 C1041.5 1060 1047 1063 1052.5 1062.5 C1055 1062 1057 1061 1058.5 1059.5 C1056 1063 1051 1065 1045.9 1065 C1037.5 1065 1030.8 1058.3 1030.8 1049.9 C1030.8 1048.7 1031 1047.6 1031.2 1046.5 Z" fill="url(#eg2)"/><path d="M1047 1043.5 C1043 1045 1039.5 1049 1040.5 1054.5 C1041.5 1060 1047 1063 1052.5 1062.5 C1055 1062 1057 1061 1058.5 1059.5 C1060 1057.5 1060.3 1056.5 1059 1056.2 C1055 1056.2 1049 1057 1047.5 1052.5 C1046.5 1049 1048 1046.5 1047 1043.5 Z" fill="#1656a8"/><circle cx="1046" cy="1049.5" r="3.2" fill="#1c1c1c"/><path d="M1048.5 1053 C1050 1055.2 1054 1056 1059.3 1055.8" stroke="#1c1c1c" stroke-width="1.8"/></svg><div class="a" style="left:1041.00px;top:1070.00px;width:9.00px;height:3.00px;background:#9a9a9a;border-radius:2px"></div><div class="a" style="left:1087.00px;top:1035.50px;width:27.50px;height:27.00px;background:#001e36;border-radius:4px"></div><div class="t" style="left:1091.0px;top:1041.96px;font-size:16.00px;color:#31a8ff;font-weight:bold;">Ps</div><svg style="left:1142px;top:1036px" width="28" height="28" viewBox="0 0 28 28"><circle cx="14" cy="14" r="13.5" fill="#2aabee"/>
<path d="M6.5 13.5l13-5.2c.6-.2 1.1.1.9.9l-2.2 10.5c-.2.7-.6.9-1.2.6l-3.3-2.5-1.6 1.6c-.2.2-.4.3-.7.3l.2-3.4 6.2-5.6c.3-.3-.1-.4-.4-.2l-7.6 4.8-3.3-1c-.7-.2-.7-.7 0-.9z" fill="#ffffff"/></svg><div class="a" style="left:1186.50px;top:1025.00px;width:49.00px;height:49.50px;background:#2c2c2c;border-radius:5px;border:1px solid #333"></div><svg style="left:1190.6px;top:1029.0px" width="44.7" height="44.7" viewBox="8 8 30 30"><path d="M26.3 11.9 L26.3 18.0 L14.6 26.7 L11.5 24.4 Z" fill="#1a86d2"/><path d="M14.6 16.5 L26.3 25.8 L26.3 31.9 L11.5 19.6 Z" fill="#1c8fdc"/><path d="M26.3 11.9 L32.0 14.9 L32.0 28.8 L26.3 31.9 Z" fill="#27a6ee"/></svg><div class="a" style="left:1201.00px;top:1070.50px;width:20.00px;height:3.00px;background:#4cc2ff;border-radius:2px"></div><svg style="left:1250px;top:1036px" width="31" height="28" viewBox="0 0 31 28">
<path d="M0 3a2 2 0 0 1 2-2h9l3 3h15a2 2 0 0 1 2 2v3H0z" fill="#e3a21a"/><rect x="0" y="6" width="31" height="21" rx="1.5" fill="#fcd462"/>
<rect x="6" y="19" width="19" height="8" rx="1.5" fill="#1d82d8"/><rect x="10" y="21.5" width="11" height="1.5" fill="#9ccff5"/></svg><div class="a" style="left:1261.00px;top:1070.00px;width:9.00px;height:3.00px;background:#9a9a9a;border-radius:2px"></div><svg style="left:1306px;top:1035px" width="30" height="30" viewBox="0 0 30 30">
<path d="M9 7V4a2 2 0 0 1 2-2h8a2 2 0 0 1 2 2v3" fill="none" stroke="#1fb2e9" stroke-width="2"/>
<rect x="1" y="7" width="28" height="22" rx="3" fill="#f0f0f0"/>
<rect x="10" y="12" width="4.5" height="4.5" fill="#f25022"/><rect x="15.5" y="12" width="4.5" height="4.5" fill="#7fba00"/><rect x="10" y="17.5" width="4.5" height="4.5" fill="#00a4ef"/><rect x="15.5" y="17.5" width="4.5" height="4.5" fill="#ffb900"/></svg><svg style="left:1580px;top:1040px" width="24" height="16" viewBox="1580 1040 24 16" fill="none"><path d="M1586.5 1052.5 L1593 1046.2 L1599.5 1052.5" stroke="#ffffff" stroke-width="2"/></svg><svg style="left:1622px;top:1040px" width="22" height="21" viewBox="0 0 22 21" fill="none" stroke="#ffffff" stroke-width="1.5">
<path d="M3 9a8 8 0 0 1 14-5M19 12a8 8 0 0 1-14 5"/><path d="M17 1v4h-4M5 20v-4h4"/></svg><div class="a" style="left:1633.00px;top:1050.00px;width:10.00px;height:10.00px;background:#0078d4;border-radius:50%"></div><div class="t" style="left:1675.0px;top:1045.15px;font-size:14.00px;color:#ffffff;font-weight:normal;">فا</div><svg style="left:1717px;top:1041px" width="22" height="18" viewBox="0 0 22 18" fill="none" stroke="#ffffff" stroke-width="1.6">
<path d="M1 6.5a14 14 0 0 1 20 0M4.5 10a9 9 0 0 1 13 0M8 13.5a4 4 0 0 1 6 0"/><circle cx="11" cy="16" r="1" fill="#ffffff"/></svg><svg style="left:1748px;top:1041px" width="21" height="18" viewBox="0 0 21 18" fill="none" stroke="#ffffff" stroke-width="1.5" stroke-linejoin="round">
<path d="M1 6h4l5-4.5v15L5 12H1z"/><path d="M13 6a4 4 0 0 1 0 6M15.5 3.5a8 8 0 0 1 0 11M18 1.5a11 11 0 0 1 0 15" /></svg><svg style="left:1772px;top:1035px" width="30" height="28" viewBox="1772 1035 30 28" fill="none"><path d="M1781.5 1044 H1793.5 Q1795.5 1044 1795.5 1046 V1054.5 Q1795.5 1056.5 1793.5 1056.5 H1780" stroke="#ffffff" stroke-width="1.7"/><path d="M1797.5 1047.5 V1053" stroke="#ffffff" stroke-width="2"/><path d="M1786.5 1040 C1781 1041 1777.5 1045 1778 1050 C1778.5 1053 1781 1054 1783 1053 C1786 1051 1787 1046 1786.5 1040 Z" fill="#ffffff"/><path d="M1784 1045 C1783 1049 1781 1053 1778.5 1056" stroke="#1c1c1c" stroke-width="1"/></svg><div class="t" style="left:1841.0px;top:1032.05px;font-size:15.30px;color:#ffffff;font-weight:normal;transform:scaleX(0.9640);transform-origin:0 0;">6:44 PM</div><div class="t" style="left:1818.0px;top:1052.55px;font-size:15.30px;color:#ffffff;font-weight:normal;transform:scaleX(1.0329);transform-origin:0 0;">11/29/2025</div></body></html>
